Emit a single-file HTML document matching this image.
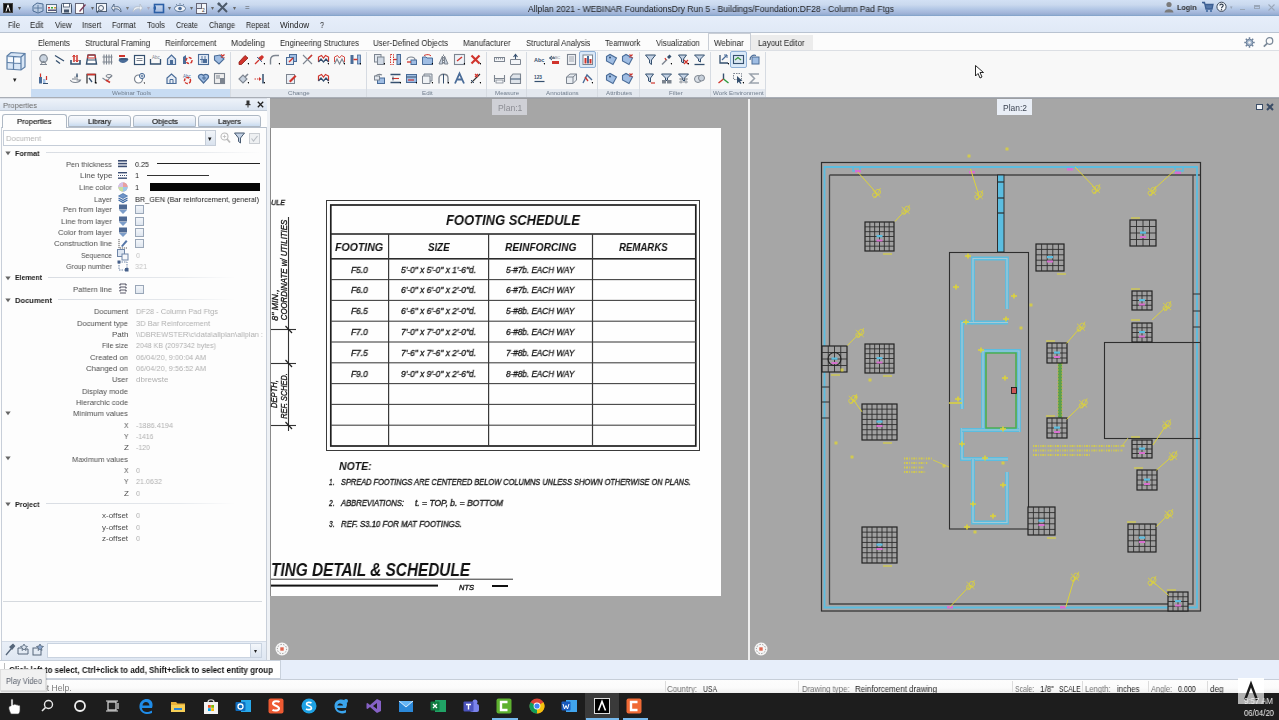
<!DOCTYPE html>
<html><head><meta charset="utf-8"><style>
*{margin:0;padding:0;box-sizing:border-box}
html,body{width:1279px;height:720px;overflow:hidden;background:#f3f3f3;font-family:"Liberation Sans",sans-serif;color:#222}
.a{position:absolute}
.t{position:absolute;white-space:nowrap;line-height:1;transform-origin:0 50%;will-change:transform}
svg{position:absolute;overflow:visible}
</style></head><body>
<div class="a" style="left:0px;top:0px;width:1279px;height:16px;background:linear-gradient(#d2e0f4 0%,#cad9ee 30%,#b4c8e6 55%,#a3b6da 80%,#8ba8cd 100%)"></div>
<div class="a" style="left:0px;top:15px;width:1279px;height:1px;background:#86a5cb"></div>
<div class="a" style="left:3px;top:3px;width:10px;height:10px;background:#111;border:1px solid #444"></div>
<svg style="left:3px;top:3px;" width="10" height="10" viewBox="0 0 10 10"><path d="M3 8.5 L5 1.8 L7 8.5" fill="none" stroke="#fff" stroke-width="1"/></svg>
<div class="t" style="left:18.00px;top:5.00px;font-size:6px;font-family:'Liberation Sans',sans-serif;font-weight:normal;font-style:normal;color:#555;">▾</div>
<svg style="left:32px;top:2px;" width="11" height="12" viewBox="0 0 11 12"><path d="M1 4 L5 1 L11 2 L11 9 L6 11 L1 9Z" fill="#b9cce4" stroke="#4d6c93" stroke-width="1"/><path d="M6 3 V10 M2 6 H10" stroke="#4d6c93" stroke-width="0.8"/></svg>
<svg style="left:46px;top:2px;" width="11" height="12" viewBox="0 0 11 12"><rect x="0.5" y="2.5" width="10" height="8" fill="#f4f4f4" stroke="#5a6f88"/><rect x="2" y="5" width="2" height="1.5" fill="#c33"/><rect x="5" y="5" width="2" height="1.5" fill="#3a3"/><rect x="8" y="5" width="2" height="1.5" fill="#c93"/><rect x="2" y="7.5" width="8" height="1.5" fill="#557"/></svg>
<svg style="left:61px;top:2px;" width="11" height="12" viewBox="0 0 11 12"><rect x="0.5" y="1.5" width="10" height="10" rx="1" fill="#dfe6ef" stroke="#44546a"/><rect x="2.5" y="1.5" width="6" height="3.5" fill="#fff" stroke="#44546a" stroke-width="0.8"/><rect x="3" y="7.5" width="5" height="3" fill="#44546a"/></svg>
<svg style="left:75px;top:2px;" width="11" height="12" viewBox="0 0 11 12"><rect x="0.5" y="1.5" width="8" height="10" fill="#fafafa" stroke="#667"/><path d="M4 9 L10 2 L11 3 L5 10Z" fill="#7a3b58"/></svg>
<div class="t" style="left:91.00px;top:5.00px;font-size:6px;font-family:'Liberation Sans',sans-serif;font-weight:normal;font-style:normal;color:#666;">▾</div>
<svg style="left:96px;top:2px;" width="11" height="12" viewBox="0 0 11 12"><rect x="0.5" y="1.5" width="10" height="8" fill="#f4f6f9" stroke="#4f5f74"/><circle cx="5" cy="6" r="2.5" fill="none" stroke="#4f5f74"/><path d="M3 8 L1 11" stroke="#4f5f74" stroke-width="1.3"/></svg>
<svg style="left:111px;top:2px;" width="11" height="12" viewBox="0 0 11 12"><path d="M10 10 C10 5 7 4 3 5 L3 2 L0.5 6 L3 9.5 L3 7 C6 6.5 8 7 10 10Z" fill="#e9eef5" stroke="#4f6580" stroke-width="0.9"/></svg>
<div class="t" style="left:126.00px;top:5.00px;font-size:6px;font-family:'Liberation Sans',sans-serif;font-weight:normal;font-style:normal;color:#777;">▾</div>
<svg style="left:132px;top:2px;" width="11" height="12" viewBox="0 0 11 12"><path d="M1 10 C1 5 4 4 8 5 L8 2 L10.5 6 L8 9.5 L8 7 C5 6.5 3 7 1 10Z" fill="#eef2f6" stroke="#b5c0cc" stroke-width="0.9"/></svg>
<div class="t" style="left:147.00px;top:5.00px;font-size:6px;font-family:'Liberation Sans',sans-serif;font-weight:normal;font-style:normal;color:#aab;">▾</div>
<svg style="left:153px;top:2px;" width="11" height="12" viewBox="0 0 11 12"><rect x="1.5" y="2.5" width="9" height="8" fill="none" stroke="#2b5fa6" stroke-width="1.6"/><path d="M0 6 L3 4 L3 8Z" fill="#2b5fa6"/></svg>
<div class="t" style="left:168.00px;top:5.00px;font-size:6px;font-family:'Liberation Sans',sans-serif;font-weight:normal;font-style:normal;color:#666;">▾</div>
<svg style="left:174px;top:2px;" width="11" height="12" viewBox="0 0 11 12"><ellipse cx="6" cy="6.5" rx="5.5" ry="3.2" fill="#eef2f8" stroke="#607a9a"/><circle cx="6" cy="6.5" r="1.8" fill="#4d6e99"/><path d="M2 2 L3 3 M6 1 V2.5 M10 2 L9 3" stroke="#7a8ea8"/></svg>
<div class="t" style="left:190.00px;top:5.00px;font-size:6px;font-family:'Liberation Sans',sans-serif;font-weight:normal;font-style:normal;color:#666;">▾</div>
<svg style="left:196px;top:2px;" width="11" height="12" viewBox="0 0 11 12"><rect x="0.5" y="1.5" width="10" height="10" fill="#f5f7fa" stroke="#667"/><rect x="0.5" y="1.5" width="5" height="5" fill="#dbe3ee" stroke="#667"/><text x="6" y="10" font-size="5" fill="#333" font-family="Liberation Sans">2</text></svg>
<div class="t" style="left:211.00px;top:5.00px;font-size:6px;font-family:'Liberation Sans',sans-serif;font-weight:normal;font-style:normal;color:#666;">▾</div>
<svg style="left:217px;top:2px;" width="11" height="12" viewBox="0 0 11 12"><path d="M1 1 L10 10 M10 1 L1 10" stroke="#4d5a6a" stroke-width="2"/><circle cx="2" cy="2" r="1.5" fill="#4d5a6a"/></svg>
<div class="t" style="left:233.00px;top:5.00px;font-size:6px;font-family:'Liberation Sans',sans-serif;font-weight:normal;font-style:normal;color:#666;">▾</div>
<div class="t" style="left:245.00px;top:4.00px;font-size:8px;font-family:'Liberation Sans',sans-serif;font-weight:normal;font-style:normal;color:#555;">=</div>
<div class="t" style="left:528.00px;top:5.00px;font-size:8.6px;font-family:'Liberation Sans',sans-serif;font-weight:normal;font-style:normal;color:#222;transform:scaleX(0.9925);">Allplan 2021 - WEBINAR FoundationsDry Run 5 - Buildings/Foundation:DF28 - Column Pad Ftgs</div>
<svg style="left:1164px;top:1px;" width="10" height="12" viewBox="0 0 10 12"><circle cx="5" cy="3.5" r="2.6" fill="#7b7b7b"/><path d="M0.5 11.5 C0.5 7 9.5 7 9.5 11.5Z" fill="#7b7b7b"/></svg>
<div class="t" style="left:1176.50px;top:4.00px;font-size:8px;font-family:'Liberation Sans',sans-serif;font-weight:bold;font-style:normal;color:#333;transform:scaleX(0.8953);">Login</div>
<svg style="left:1202px;top:1px;" width="11" height="12" viewBox="0 0 11 12"><path d="M0 1.5 H2.5 L4 8 H10 L11 3.5 H3" fill="#5577a8" stroke="#3d5f93" stroke-width="1.3"/><circle cx="5" cy="10" r="1.1" fill="#3f6aa0"/><circle cx="9" cy="10" r="1.1" fill="#3f6aa0"/></svg>
<svg style="left:1216px;top:1px;" width="11" height="12" viewBox="0 0 11 12"><circle cx="5.5" cy="5.8" r="4.6" fill="#f3f6fa" stroke="#3d4a5c" stroke-width="1"/><path d="M3.8 4.6 C3.8 2.6 7.2 2.6 7.2 4.6 C7.2 5.8 5.5 5.8 5.5 7.2" fill="none" stroke="#2d3a4c" stroke-width="1.1"/><circle cx="5.5" cy="8.8" r="0.7" fill="#2d3a4c"/></svg>
<div class="t" style="left:1230.00px;top:5.00px;font-size:5px;font-family:'Liberation Sans',sans-serif;font-weight:normal;font-style:normal;color:#98a4b5;">▾</div>
<div class="a" style="left:1240px;top:9px;width:5px;height:1px;background:#9aa7b8"></div>
<div class="a" style="left:1254px;top:5px;width:6px;height:4px;border:1px solid #9aa7b8;border-top-width:2px"></div>
<svg style="left:1268px;top:4px;" width="7" height="7" viewBox="0 0 7 7"><path d="M0.5 0.5 L6.5 6.5 M6.5 0.5 L0.5 6.5" stroke="#9aa7b8" stroke-width="1.1"/></svg>
<div class="a" style="left:0px;top:16px;width:1279px;height:16px;background:linear-gradient(#e6eefa,#e0e9f6)"></div>
<div class="a" style="left:0px;top:32px;width:1279px;height:1px;background:#b9c3d1"></div>
<div class="t" style="left:7.80px;top:22.00px;font-size:8.2px;font-family:'Liberation Sans',sans-serif;font-weight:normal;font-style:normal;color:#1e1e1e;transform:scaleX(0.9013);">File</div>
<div class="t" style="left:30.30px;top:22.00px;font-size:8.2px;font-family:'Liberation Sans',sans-serif;font-weight:normal;font-style:normal;color:#1e1e1e;transform:scaleX(0.9497);">Edit</div>
<div class="t" style="left:54.70px;top:22.00px;font-size:8.2px;font-family:'Liberation Sans',sans-serif;font-weight:normal;font-style:normal;color:#1e1e1e;transform:scaleX(0.9370);">View</div>
<div class="t" style="left:81.90px;top:22.00px;font-size:8.2px;font-family:'Liberation Sans',sans-serif;font-weight:normal;font-style:normal;color:#1e1e1e;transform:scaleX(0.9324);">Insert</div>
<div class="t" style="left:112.00px;top:22.00px;font-size:8.2px;font-family:'Liberation Sans',sans-serif;font-weight:normal;font-style:normal;color:#1e1e1e;transform:scaleX(0.9099);">Format</div>
<div class="t" style="left:146.60px;top:22.00px;font-size:8.2px;font-family:'Liberation Sans',sans-serif;font-weight:normal;font-style:normal;color:#1e1e1e;transform:scaleX(0.9307);">Tools</div>
<div class="t" style="left:175.60px;top:22.00px;font-size:8.2px;font-family:'Liberation Sans',sans-serif;font-weight:normal;font-style:normal;color:#1e1e1e;transform:scaleX(0.8910);">Create</div>
<div class="t" style="left:208.75px;top:22.00px;font-size:8.2px;font-family:'Liberation Sans',sans-serif;font-weight:normal;font-style:normal;color:#1e1e1e;transform:scaleX(0.9063);">Change</div>
<div class="t" style="left:246.00px;top:22.00px;font-size:8.2px;font-family:'Liberation Sans',sans-serif;font-weight:normal;font-style:normal;color:#1e1e1e;transform:scaleX(0.8862);">Repeat</div>
<div class="t" style="left:280.30px;top:22.00px;font-size:8.2px;font-family:'Liberation Sans',sans-serif;font-weight:normal;font-style:normal;color:#1e1e1e;transform:scaleX(0.9991);">Window</div>
<div class="t" style="left:320.30px;top:22.00px;font-size:8.2px;font-family:'Liberation Sans',sans-serif;font-weight:normal;font-style:normal;color:#1e1e1e;transform:scaleX(0.8767);">?</div>
<div class="a" style="left:0px;top:33px;width:1279px;height:17px;background:#fcfcfc"></div>
<div class="a" style="left:750px;top:35px;width:63px;height:15px;background:#ececec"></div>
<div class="a" style="left:708px;top:33px;width:43px;height:18px;background:#fbfbfb;border:1px solid #c9ced6;border-bottom:none"></div>
<div class="t" style="left:38.10px;top:39.00px;font-size:8.7px;font-family:'Liberation Sans',sans-serif;font-weight:normal;font-style:normal;color:#262626;transform:scaleX(0.8808);">Elements</div>
<div class="t" style="left:84.70px;top:39.00px;font-size:8.7px;font-family:'Liberation Sans',sans-serif;font-weight:normal;font-style:normal;color:#262626;transform:scaleX(0.9139);">Structural Framing</div>
<div class="t" style="left:164.70px;top:39.00px;font-size:8.7px;font-family:'Liberation Sans',sans-serif;font-weight:normal;font-style:normal;color:#262626;transform:scaleX(0.9115);">Reinforcement</div>
<div class="t" style="left:231.25px;top:39.00px;font-size:8.7px;font-family:'Liberation Sans',sans-serif;font-weight:normal;font-style:normal;color:#262626;transform:scaleX(0.9556);">Modeling</div>
<div class="t" style="left:279.70px;top:39.00px;font-size:8.7px;font-family:'Liberation Sans',sans-serif;font-weight:normal;font-style:normal;color:#262626;transform:scaleX(0.8939);">Engineering Structures</div>
<div class="t" style="left:373.40px;top:39.00px;font-size:8.7px;font-family:'Liberation Sans',sans-serif;font-weight:normal;font-style:normal;color:#262626;transform:scaleX(0.9031);">User-Defined Objects</div>
<div class="t" style="left:463.40px;top:39.00px;font-size:8.7px;font-family:'Liberation Sans',sans-serif;font-weight:normal;font-style:normal;color:#262626;transform:scaleX(0.9299);">Manufacturer</div>
<div class="t" style="left:525.60px;top:39.00px;font-size:8.7px;font-family:'Liberation Sans',sans-serif;font-weight:normal;font-style:normal;color:#262626;transform:scaleX(0.9011);">Structural Analysis</div>
<div class="t" style="left:605.30px;top:39.00px;font-size:8.7px;font-family:'Liberation Sans',sans-serif;font-weight:normal;font-style:normal;color:#262626;transform:scaleX(0.8916);">Teamwork</div>
<div class="t" style="left:655.60px;top:39.00px;font-size:8.7px;font-family:'Liberation Sans',sans-serif;font-weight:normal;font-style:normal;color:#262626;transform:scaleX(0.9008);">Visualization</div>
<div class="t" style="left:714.00px;top:39.00px;font-size:8.7px;font-family:'Liberation Sans',sans-serif;font-weight:normal;font-style:normal;color:#262626;transform:scaleX(0.9238);">Webinar</div>
<div class="t" style="left:758.40px;top:39.00px;font-size:8.7px;font-family:'Liberation Sans',sans-serif;font-weight:normal;font-style:normal;color:#262626;transform:scaleX(0.9081);">Layout Editor</div>
<svg style="left:1244px;top:37px;" width="11" height="11" viewBox="0 0 11 11"><circle cx="5.5" cy="5.5" r="3.3" fill="#9fb2c9" stroke="#6d819a" stroke-width="1"/><circle cx="5.5" cy="5.5" r="1.3" fill="#f6f6f6"/><path d="M5.5 0.3 V2 M5.5 9 V10.7 M0.3 5.5 H2 M9 5.5 H10.7 M1.8 1.8 L3 3 M8 8 L9.2 9.2 M9.2 1.8 L8 3 M3 8 L1.8 9.2" stroke="#6d819a" stroke-width="1.5"/></svg>
<svg style="left:1263px;top:37px;" width="11" height="11" viewBox="0 0 11 11"><circle cx="6.5" cy="4" r="3.3" fill="none" stroke="#7a8898" stroke-width="1.2"/><path d="M4.2 6.3 L0.8 9.7" stroke="#7a8898" stroke-width="1.7"/></svg>
<div class="a" style="left:0px;top:50px;width:1279px;height:47px;background:#f8f8f8"></div>
<div class="a" style="left:31px;top:50px;width:1248px;height:1px;background:#dcdfe4"></div>
<div class="a" style="left:31px;top:50px;width:1px;height:47px;background:#dfe3e8"></div>
<div class="a" style="left:31px;top:89px;width:200px;height:8px;background:#c8dcf3"></div>
<div class="a" style="left:230px;top:52px;width:1px;height:45px;background:#d6dbe2"></div>
<div class="t" style="left:111.51px;top:90.00px;font-size:6.2px;font-family:'Liberation Sans',sans-serif;font-weight:normal;font-style:normal;color:#6f7c8c;">Webinar Tools</div>
<div class="a" style="left:231px;top:89px;width:136px;height:8px;background:#e3e8ef"></div>
<div class="a" style="left:366px;top:52px;width:1px;height:45px;background:#d6dbe2"></div>
<div class="t" style="left:288.16px;top:90.00px;font-size:6.2px;font-family:'Liberation Sans',sans-serif;font-weight:normal;font-style:normal;color:#6f7c8c;">Change</div>
<div class="a" style="left:367px;top:89px;width:120px;height:8px;background:#e3e8ef"></div>
<div class="a" style="left:486px;top:52px;width:1px;height:45px;background:#d6dbe2"></div>
<div class="t" style="left:421.66px;top:90.00px;font-size:6.2px;font-family:'Liberation Sans',sans-serif;font-weight:normal;font-style:normal;color:#6f7c8c;">Edit</div>
<div class="a" style="left:487px;top:89px;width:40px;height:8px;background:#e3e8ef"></div>
<div class="a" style="left:526px;top:52px;width:1px;height:45px;background:#d6dbe2"></div>
<div class="t" style="left:494.96px;top:90.00px;font-size:6.2px;font-family:'Liberation Sans',sans-serif;font-weight:normal;font-style:normal;color:#6f7c8c;">Measure</div>
<div class="a" style="left:527px;top:89px;width:71px;height:8px;background:#e3e8ef"></div>
<div class="a" style="left:597px;top:52px;width:1px;height:45px;background:#d6dbe2"></div>
<div class="t" style="left:546.16px;top:90.00px;font-size:6.2px;font-family:'Liberation Sans',sans-serif;font-weight:normal;font-style:normal;color:#6f7c8c;">Annotations</div>
<div class="a" style="left:598px;top:89px;width:42px;height:8px;background:#e3e8ef"></div>
<div class="a" style="left:639px;top:52px;width:1px;height:45px;background:#d6dbe2"></div>
<div class="t" style="left:605.93px;top:90.00px;font-size:6.2px;font-family:'Liberation Sans',sans-serif;font-weight:normal;font-style:normal;color:#6f7c8c;">Attributes</div>
<div class="a" style="left:640px;top:89px;width:71px;height:8px;background:#e3e8ef"></div>
<div class="a" style="left:710px;top:52px;width:1px;height:45px;background:#d6dbe2"></div>
<div class="t" style="left:668.62px;top:90.00px;font-size:6.2px;font-family:'Liberation Sans',sans-serif;font-weight:normal;font-style:normal;color:#6f7c8c;">Filter</div>
<div class="a" style="left:711px;top:89px;width:55px;height:8px;background:#e3e8ef"></div>
<div class="a" style="left:765px;top:52px;width:1px;height:45px;background:#d6dbe2"></div>
<div class="t" style="left:713.11px;top:90.00px;font-size:6.2px;font-family:'Liberation Sans',sans-serif;font-weight:normal;font-style:normal;color:#6f7c8c;">Work Environment</div>
<div class="a" style="left:0px;top:97px;width:1279px;height:1px;background:#d0d5dc"></div>
<svg style="left:5px;top:51px;" width="22" height="20" viewBox="0 0 22 20"><path d="M2 5 L6 1.5 L20 2.5 L20 16 L16 19 L2 18Z" fill="#d8e6f6" stroke="#5c7ea6" stroke-width="1.2"/><path d="M2 5 L16 6 L16 19 M16 6 L20 2.5 M2 11.5 L16 12.5 M8.5 5.5 V18.5" fill="none" stroke="#5c7ea6" stroke-width="1.2"/><rect x="3" y="6.5" width="5" height="4.5" fill="#fff" opacity="0.8"/><rect x="9.5" y="7" width="5.5" height="4.5" fill="#fff" opacity="0.8"/></svg>
<div class="t" style="left:13.00px;top:76.00px;font-size:7px;font-family:'Liberation Sans',sans-serif;font-weight:normal;font-style:normal;color:#222;">▾</div>
<svg style="left:37.5px;top:54.0px;" width="12" height="12" viewBox="0 0 12 12"><circle cx="5.5" cy="4.5" r="3.8" fill="#c9d3df" stroke="#7d8590" stroke-width="1.2"/><path d="M3 9.5 L5.5 7.5 L8 9.5 M2 10.5 H9" stroke="#7d8590" stroke-width="1.2" fill="none"/></svg>
<svg style="left:53.5px;top:54.0px;" width="12" height="12" viewBox="0 0 12 12"><path d="M1 1.5 L10 7 M2 6.5 L6 9.5" stroke="#35506f" stroke-width="1.3"/></svg>
<svg style="left:69.5px;top:54.0px;" width="12" height="12" viewBox="0 0 12 12"><path d="M1 6 V10 H10 V6" fill="none" stroke="#35506f" stroke-width="1.6"/><path d="M4 8 V1 M7 1 V8" stroke="#d0342c" stroke-width="1.5"/><path d="M2.5 3 L4 1 L5.5 3 M5.5 6 L7 8 L8.5 6" fill="none" stroke="#d0342c" stroke-width="1"/></svg>
<svg style="left:85.5px;top:54.0px;" width="12" height="12" viewBox="0 0 12 12"><path d="M2 1 H9 L10.5 10 H0.5Z" fill="#fff" stroke="#35506f" stroke-width="1.4"/><path d="M2 1 H9 L9.5 4 H1.5Z" fill="none" stroke="#d0342c" stroke-width="1"/><path d="M1.5 6 H9.5" stroke="#35506f" stroke-width="1"/></svg>
<svg style="left:102.0px;top:54.0px;" width="12" height="12" viewBox="0 0 12 12"><path d="M2 0.5 V10.5 M4.5 0.5 V10.5 M7 0.5 V10.5 M9.5 0.5 V10.5 M0.5 3 H10.5 M0.5 8 H10.5" stroke="#7d8590" stroke-width="1.1"/></svg>
<svg style="left:118.0px;top:54.0px;" width="12" height="12" viewBox="0 0 12 12"><rect x="1" y="1" width="6" height="2" fill="#d0342c"/><path d="M0.5 6 C2 10 8 10 10.5 5.5 L8 4 H3Z" fill="#4a6c98"/><path d="M1 5 H10" stroke="#35506f" stroke-width="1.2"/></svg>
<svg style="left:134.0px;top:54.0px;" width="12" height="12" viewBox="0 0 12 12"><rect x="0.5" y="1.5" width="10" height="9" fill="#fff" stroke="#35506f" stroke-width="1.2"/><path d="M2.5 4.5 H8.5 M2.5 6.5 H8.5" stroke="#7d8590" stroke-width="1"/></svg>
<svg style="left:150.0px;top:54.0px;" width="12" height="12" viewBox="0 0 12 12"><path d="M0.5 5 V10 H10.5 V5" fill="none" stroke="#35506f" stroke-width="1.3"/><text x="2" y="5" font-size="4.5" fill="#7d8590" font-family="Liberation Sans">Abc</text></svg>
<svg style="left:165.5px;top:54.0px;" width="12" height="12" viewBox="0 0 12 12"><path d="M1.5 10.5 V5 L5.5 1 L9.5 5 V10.5Z" fill="#dbe5f2" stroke="#4a6c98" stroke-width="1.2"/><rect x="4" y="6" width="3" height="4.5" fill="#4a6c98"/></svg>
<svg style="left:181.5px;top:54.0px;" width="12" height="12" viewBox="0 0 12 12"><path d="M1 10 V3 L4 1 V10Z" fill="#4a6c98"/><circle cx="7" cy="6.5" r="3" fill="none" stroke="#d0342c" stroke-width="1.5" stroke-dasharray="3 1.5"/></svg>
<svg style="left:197.5px;top:54.0px;" width="12" height="12" viewBox="0 0 12 12"><rect x="0.5" y="0.5" width="10" height="10" fill="#e4ecf6" stroke="#4a6c98" stroke-width="1.1"/><path d="M4 2 V9 M7 2 V9 M2 5.5 H9" stroke="#4a6c98" stroke-width="0.9"/><rect x="5" y="5" width="4" height="4" fill="#4a6c98"/></svg>
<svg style="left:213.5px;top:54.0px;" width="12" height="12" viewBox="0 0 12 12"><path d="M0.5 2 L6 1 L10 5 L5 10 L0.5 6Z" fill="#9fbde3" stroke="#4a6c98" stroke-width="1.1"/><path d="M7 0.5 L10.5 3.5 M10.5 0.5 L7 3.5" stroke="#d0342c" stroke-width="1.3"/></svg>
<svg style="left:237.9px;top:54.0px;" width="12" height="12" viewBox="0 0 12 12"><path d="M1 8 L7 1.5 L10 4 L3.5 10.5 H1Z" fill="#d0342c" stroke="#8d1d17" stroke-width="0.8"/><path d="M9.5 9 L11 9 L11 11Z" fill="#000"/></svg>
<svg style="left:253.5px;top:54.0px;" width="12" height="12" viewBox="0 0 12 12"><path d="M1 10 L5 6" stroke="#d0342c" stroke-width="1.3"/><path d="M4 4 L8 1 L10 3 L7 7Z" fill="#d0342c"/><path d="M3 3 L8 8" stroke="#4a6c98" stroke-width="1"/><path d="M9.5 9 L11 9 L11 11Z" fill="#000"/></svg>
<svg style="left:269.0px;top:54.0px;" width="12" height="12" viewBox="0 0 12 12"><path d="M1.5 10.5 V6 C1.5 3 3.5 1.5 6.5 1.5 H10" fill="none" stroke="#7d8590" stroke-width="1.4"/><path d="M9.5 9 L11 9 L11 11Z" fill="#000"/></svg>
<svg style="left:285.5px;top:54.0px;" width="12" height="12" viewBox="0 0 12 12"><rect x="3.5" y="0.5" width="7" height="7" fill="#9fbde3" stroke="#4a6c98" stroke-width="1"/><rect x="0.5" y="3.5" width="7" height="7" fill="#dfe7f2" stroke="#4a6c98" stroke-width="1"/><path d="M3 8 L7 4" stroke="#d0342c" stroke-width="1.4"/></svg>
<svg style="left:302.0px;top:54.0px;" width="12" height="12" viewBox="0 0 12 12"><path d="M1 1 L10 10 M10 1 L1 10" stroke="#7d8590" stroke-width="1.1"/><path d="M6 5 L10 1" stroke="#d0342c" stroke-width="1.5"/></svg>
<svg style="left:317.5px;top:54.0px;" width="12" height="12" viewBox="0 0 12 12"><path d="M0.5 8 V3 L3.5 1.5 L5.5 4 L7.5 1.5 L10.5 3 V8" fill="none" stroke="#d0342c" stroke-width="1.2"/><path d="M0.5 8 L3 5 L5.5 8 L8 5 L10.5 8" fill="none" stroke="#35506f" stroke-width="1.2"/><path d="M9.5 9 L11 9 L11 11Z" fill="#000"/></svg>
<svg style="left:333.5px;top:54.0px;" width="12" height="12" viewBox="0 0 12 12"><path d="M0.5 8 V3 L3.5 1.5 L5.5 4 L7.5 1.5 L10.5 3 V8" fill="none" stroke="#d0342c" stroke-width="0.9"/><path d="M0.5 10 L3 5 L5.5 10 L8 5 L10.5 10" fill="none" stroke="#7d8590" stroke-width="1.2"/><path d="M9.5 9 L11 9 L11 11Z" fill="#000"/></svg>
<svg style="left:349.5px;top:54.0px;" width="12" height="12" viewBox="0 0 12 12"><rect x="0.5" y="1" width="3" height="9" fill="#4a6c98"/><rect x="7.5" y="1" width="3" height="9" fill="#9fbde3" stroke="#4a6c98" stroke-width="0.8"/><path d="M3.5 5.5 H7.5" stroke="#d0342c" stroke-width="1.5"/><path d="M9.5 9 L11 9 L11 11Z" fill="#000"/></svg>
<svg style="left:373.9px;top:54.0px;" width="12" height="12" viewBox="0 0 12 12"><rect x="0.5" y="0.5" width="6.5" height="7.5" fill="#e3e8ef" stroke="#7d8590"/><rect x="3.5" y="3" width="6.5" height="7.5" fill="#cfd8e3" stroke="#7d8590"/><path d="M9.5 9 L11 9 L11 11Z" fill="#000"/></svg>
<svg style="left:390.3px;top:54.0px;" width="12" height="12" viewBox="0 0 12 12"><rect x="0.5" y="0.5" width="3" height="10" fill="none" stroke="#d0342c" stroke-dasharray="1.5 1"/><path d="M3 5.5 H7" stroke="#d0342c" stroke-width="1.3"/><rect x="7" y="0.5" width="3.5" height="10" fill="#9fbde3" stroke="#4a6c98"/><path d="M9.5 9 L11 9 L11 11Z" fill="#000"/></svg>
<svg style="left:405.9px;top:54.0px;" width="12" height="12" viewBox="0 0 12 12"><path d="M1 6 C1 2 9 2 9 6" fill="none" stroke="#7d8590" stroke-width="1.2"/><rect x="5" y="6" width="5.5" height="4.5" fill="#9fbde3" stroke="#4a6c98"/><path d="M1 8 H5" stroke="#d0342c" stroke-width="1.3"/></svg>
<svg style="left:422.0px;top:54.0px;" width="12" height="12" viewBox="0 0 12 12"><path d="M0.5 3 H4 L5 4 H10.5 V10.5 H0.5Z" fill="#9fbde3" stroke="#4a6c98"/><path d="M2 1.5 C5 0 8 0.5 9 2" fill="none" stroke="#d0342c" stroke-width="1"/><path d="M9.5 9 L11 9 L11 11Z" fill="#000"/></svg>
<svg style="left:438.25px;top:54.0px;" width="12" height="12" viewBox="0 0 12 12"><path d="M5.5 0.5 V10.5" stroke="#7d8590" stroke-dasharray="1.5 1"/><path d="M4.5 2 L1 10 H4.5Z M6.5 2 L10 10 H6.5Z" fill="#c8d2de" stroke="#7d8590"/></svg>
<svg style="left:453.9px;top:54.0px;" width="12" height="12" viewBox="0 0 12 12"><rect x="0.5" y="0.5" width="10" height="10" fill="#eef2f7" stroke="#7d8590" stroke-width="1.1"/><path d="M3 7 L8 3" stroke="#d0342c" stroke-width="1.4"/><path d="M9.5 9 L11 9 L11 11Z" fill="#000"/></svg>
<svg style="left:469.5px;top:54.0px;" width="12" height="12" viewBox="0 0 12 12"><path d="M1.5 1.5 L9.5 9.5 M9.5 1.5 L1.5 9.5" stroke="#d0342c" stroke-width="2.2"/><path d="M9.5 9 L11 9 L11 11Z" fill="#000"/></svg>
<svg style="left:493.9px;top:54.0px;" width="12" height="12" viewBox="0 0 12 12"><rect x="0.5" y="3.5" width="10" height="4" fill="#f3f5f8" stroke="#7d8590" stroke-width="1"/><path d="M2.5 3.5 V5.5 M4.5 3.5 V5.5 M6.5 3.5 V5.5 M8.5 3.5 V5.5" stroke="#7d8590" stroke-width="0.8"/></svg>
<svg style="left:509.5px;top:54.0px;" width="12" height="12" viewBox="0 0 12 12"><path d="M0.5 10.5 V5.5 H10.5 V10.5Z" fill="#f3f5f8" stroke="#7d8590"/><path d="M5.5 5 V1 M3.5 3 L5.5 0.5 L7.5 3" fill="none" stroke="#35506f" stroke-width="1.1"/></svg>
<svg style="left:533.5px;top:54.0px;" width="12" height="12" viewBox="0 0 12 12"><text x="0" y="8" font-size="5.5" font-weight="bold" fill="#35506f" font-family="Liberation Sans">Abc</text><path d="M9.5 9 L11 9 L11 11Z" fill="#000"/></svg>
<svg style="left:549.2px;top:54.0px;" width="12" height="12" viewBox="0 0 12 12"><text x="3" y="4.5" font-size="4" fill="#7d8590" font-family="Liberation Sans">ABC</text><path d="M0.5 4 L3 2 M0.5 4 L3 6 M0.5 4 H6" stroke="#35506f" stroke-width="1"/><rect x="3" y="7" width="7" height="3" fill="#d0342c"/></svg>
<svg style="left:565.5px;top:54.0px;" width="12" height="12" viewBox="0 0 12 12"><rect x="1.5" y="0.5" width="8" height="10" fill="#f0f2f5" stroke="#7d8590" stroke-width="1.1"/><path d="M3 3 H8 M3 5 H8 M3 7 H8" stroke="#7d8590" stroke-width="0.7"/></svg>
<svg style="left:605.5px;top:54.0px;" width="12" height="12" viewBox="0 0 12 12"><path d="M0.5 2.5 L4 0.5 L10.5 4 L7 10.5 L0.5 7Z" fill="#9fbde3" stroke="#4a6c98" stroke-width="1.1"/><circle cx="4" cy="3.5" r="1" fill="#35506f"/></svg>
<svg style="left:621.5px;top:54.0px;" width="12" height="12" viewBox="0 0 12 12"><path d="M0.5 2.5 L4 0.5 L10.5 4 L7 10.5 L0.5 7Z" fill="#9fbde3" stroke="#4a6c98" stroke-width="1.1"/><path d="M7.5 0.5 L10.5 3.5 M10.5 0.5 L7.5 3.5" stroke="#d0342c" stroke-width="1.2"/></svg>
<svg style="left:644.5px;top:54.0px;" width="12" height="12" viewBox="0 0 12 12"><path d="M0.5 1 H10.5 L6.5 6 V10.5 L4.5 9 V6Z" fill="#c5d3e5" stroke="#35506f" stroke-width="1"/></svg>
<svg style="left:660.5px;top:54.0px;" width="12" height="12" viewBox="0 0 12 12"><path d="M1 10.5 L6 5.5" stroke="#7d8590" stroke-width="1.4"/><path d="M6 3 L8.5 0.5 L10.5 2.5 L8 5Z" fill="#35506f"/><path d="M5 6 L4 4" stroke="#d0342c" stroke-width="1.2"/><path d="M9.5 9 L11 9 L11 11Z" fill="#000"/></svg>
<svg style="left:677.5px;top:54.0px;" width="12" height="12" viewBox="0 0 12 12"><path d="M0.5 1 H8.5 L5.5 5 V9 L3.5 8 V5Z" fill="#c5d3e5" stroke="#35506f" stroke-width="1"/><path d="M6 6 L10 10 M10 6 L6 10" stroke="#d0342c" stroke-width="1.2"/><path d="M9.5 9 L11 9 L11 11Z" fill="#000"/></svg>
<svg style="left:693.5px;top:54.0px;" width="12" height="12" viewBox="0 0 12 12"><path d="M0.5 1 H10.5 L6.5 5 V8 L4.5 7 V5Z" fill="#c5d3e5" stroke="#35506f" stroke-width="1"/><path d="M0.5 10.5 H10.5" stroke="#35506f" stroke-width="1.3"/></svg>
<svg style="left:717.5px;top:54.0px;" width="12" height="12" viewBox="0 0 12 12"><path d="M2 1 V9 H10" fill="none" stroke="#35506f" stroke-width="1.3"/><path d="M4 6 L9 1" stroke="#4a6c98" stroke-width="1.2"/><path d="M6 1 H9 V4" fill="none" stroke="#4a6c98"/><path d="M9.5 9 L11 9 L11 11Z" fill="#000"/></svg>
<svg style="left:749.2px;top:54.0px;" width="12" height="12" viewBox="0 0 12 12"><rect x="3" y="3" width="7" height="7" fill="#9fbde3" stroke="#4a6c98"/><path d="M1 6 C1 2 4 0.5 7 1.5" fill="none" stroke="#4a6c98" stroke-width="1.2"/></svg>
<svg style="left:37.5px;top:73.0px;" width="12" height="12" viewBox="0 0 12 12"><rect x="1" y="4" width="3" height="6.5" fill="#4a6c98"/><rect x="5" y="6" width="2.5" height="4.5" fill="#9fbde3"/><path d="M2.5 0.5 V4 M8.5 3 V7" stroke="#d0342c" stroke-width="1.2"/><path d="M5 10.5 H10" stroke="#35506f" stroke-width="1"/></svg>
<svg style="left:69.5px;top:73.0px;" width="12" height="12" viewBox="0 0 12 12"><path d="M0.5 7 C1 10 9 10.5 10.5 7 H7 V2 M5 7 V3.5 M3 7 V5" fill="none" stroke="#7d8590" stroke-width="1.1"/><path d="M7 0.5 L7 4" stroke="#35506f" stroke-width="1.3"/></svg>
<svg style="left:85.5px;top:73.0px;" width="12" height="12" viewBox="0 0 12 12"><path d="M1 10.5 V1.5 H9.5 V10.5" fill="none" stroke="#3a3a3a" stroke-width="1.3"/><path d="M1 1.5 H9.5" stroke="#d0342c" stroke-width="1.6"/><path d="M3 5 L6 9" stroke="#35506f" stroke-width="1.3"/><path d="M8.5 9 L10.5 9 L10.5 11Z" fill="#000"/></svg>
<svg style="left:101.5px;top:73.0px;" width="12" height="12" viewBox="0 0 12 12"><path d="M0.5 5 L5 8 L10 2" fill="none" stroke="#7d8590" stroke-width="1.1"/><path d="M4 7 L8 9.5" stroke="#d0342c" stroke-width="1.6"/><ellipse cx="7" cy="3" rx="3" ry="1.5" fill="none" stroke="#7d8590"/></svg>
<svg style="left:133.5px;top:73.0px;" width="12" height="12" viewBox="0 0 12 12"><circle cx="4.5" cy="6" r="4" fill="#fff" stroke="#7d8590" stroke-width="1.2"/><circle cx="8" cy="3" r="2.6" fill="#fff" stroke="#4a6c98" stroke-width="1"/><path d="M8 1.5 V4.5 M6.5 3 H9.5" stroke="#4a6c98" stroke-width="0.9"/><path d="M9.5 9.5 L11 9.5 L11 11Z" fill="#000"/></svg>
<svg style="left:165.5px;top:73.0px;" width="12" height="12" viewBox="0 0 12 12"><path d="M1 10.5 V5 L5.5 1 L10 5 V10.5Z" fill="#e8eef6" stroke="#4a6c98" stroke-width="1.2"/><path d="M4 10.5 V6.5 H7 V10.5" fill="none" stroke="#4a6c98" stroke-width="1"/></svg>
<svg style="left:181.5px;top:73.0px;" width="12" height="12" viewBox="0 0 12 12"><text x="1" y="5" font-size="4.5" fill="#4a6c98" font-family="Liberation Sans">Abc</text><circle cx="5.5" cy="7.5" r="3" fill="none" stroke="#d0342c" stroke-width="1.5" stroke-dasharray="3 1.2"/></svg>
<svg style="left:197.5px;top:73.0px;" width="12" height="12" viewBox="0 0 12 12"><path d="M5.5 10 L0.8 5 C-0.5 2 3 0 5.5 2.5 C8 0 11.5 2 10.2 5Z" fill="#9fbde3" stroke="#4a6c98" stroke-width="1.2"/><path d="M6 3 V7 M4 5 H8" stroke="#4a6c98" stroke-width="1"/></svg>
<svg style="left:213.5px;top:73.0px;" width="12" height="12" viewBox="0 0 12 12"><rect x="0.5" y="0.5" width="10" height="10" fill="#eee" stroke="#7d8590" stroke-width="1.1"/><path d="M2 3 H6 M2 5 H6" stroke="#7d8590"/><rect x="6" y="5" width="4" height="5" fill="#7d8590"/></svg>
<svg style="left:237.5px;top:73.0px;" width="12" height="12" viewBox="0 0 12 12"><path d="M1 6 L5 2 L9 6 L5 10Z" fill="#c8d2de" stroke="#7d8590" stroke-width="1.1"/><path d="M7 4 L10 1" stroke="#7d8590" stroke-width="1.6"/><path d="M9.5 9 L11 9 L11 11Z" fill="#000"/></svg>
<svg style="left:253.5px;top:73.0px;" width="12" height="12" viewBox="0 0 12 12"><path d="M0.5 6 H6" stroke="#d0342c" stroke-width="1.2" stroke-dasharray="1.5 1"/><path d="M5 4 L7.5 6 L5 8Z" fill="#d0342c"/><path d="M9 1 V10.5" stroke="#35506f" stroke-width="1.5"/><path d="M9.5 9 L11 9 L11 11Z" fill="#000"/></svg>
<svg style="left:285.5px;top:73.0px;" width="12" height="12" viewBox="0 0 12 12"><rect x="0.5" y="1.5" width="8" height="9" fill="#e9eef5" stroke="#7d8590" stroke-width="1"/><path d="M3 8 L9 2 L10.5 3.5 L4.5 9.5Z" fill="#d0342c"/></svg>
<svg style="left:317.5px;top:73.0px;" width="12" height="12" viewBox="0 0 12 12"><path d="M0.5 8 V3 L3.5 1.5 L5.5 4 L7.5 1.5 L10.5 3 V8" fill="none" stroke="#d0342c" stroke-width="1.2"/><path d="M0.5 8 L3 5 L5.5 8 L8 5 L10.5 8" fill="none" stroke="#35506f" stroke-width="1.2"/><path d="M9.5 9 L11 9 L11 11Z" fill="#000"/></svg>
<svg style="left:373.9px;top:73.0px;" width="12" height="12" viewBox="0 0 12 12"><path d="M1 5 C1 2 5 0.5 8 2" fill="none" stroke="#7d8590" stroke-width="1.2"/><rect x="3.5" y="5" width="7" height="5.5" fill="#9fbde3" stroke="#4a6c98"/><rect x="0.5" y="3" width="5" height="4" fill="#e3e8ef" stroke="#7d8590"/></svg>
<svg style="left:390.3px;top:73.0px;" width="12" height="12" viewBox="0 0 12 12"><path d="M0.5 1.5 H10.5 M0.5 9.5 H10.5" stroke="#35506f" stroke-width="1.4"/><path d="M2 5.5 H9" stroke="#d0342c" stroke-width="1.1"/><path d="M3 3.5 V7.5" stroke="#35506f"/><path d="M9.5 9 L11 9 L11 11Z" fill="#000"/></svg>
<svg style="left:405.9px;top:73.0px;" width="12" height="12" viewBox="0 0 12 12"><rect x="0.5" y="1.5" width="10" height="8" fill="#9fbde3" stroke="#4a6c98"/><path d="M0.5 4 H10.5" stroke="#35506f"/><path d="M2 7 H8" stroke="#d0342c" stroke-width="1.2"/><path d="M9.5 9 L11 9 L11 11Z" fill="#000"/></svg>
<svg style="left:422.0px;top:73.0px;" width="12" height="12" viewBox="0 0 12 12"><path d="M2 1 H10 V8 H2Z" fill="#dde2e8" stroke="#7d8590"/><path d="M0.5 3 H8 V10.5 H0.5Z" fill="#eef1f4" stroke="#7d8590"/><path d="M9.5 9 L11 9 L11 11Z" fill="#000"/></svg>
<svg style="left:438.25px;top:73.0px;" width="12" height="12" viewBox="0 0 12 12"><path d="M1 10.5 V5 C1 0 10 0 10 5 V10.5" fill="none" stroke="#7d8590" stroke-width="1.3"/><path d="M5.5 1 V10.5" stroke="#35506f"/><path d="M9.5 9 L11 9 L11 11Z" fill="#000"/></svg>
<svg style="left:453.9px;top:73.0px;" width="12" height="12" viewBox="0 0 12 12"><path d="M1 10.5 L5.5 0.5 L10 10.5 M3 6.5 H8" fill="none" stroke="#4a6c98" stroke-width="1.8"/></svg>
<svg style="left:469.5px;top:73.0px;" width="12" height="12" viewBox="0 0 12 12"><path d="M1 10 L10 1" stroke="#333" stroke-width="1.1"/><path d="M5 1 L8 4 M8 1 L5 4" stroke="#d0342c" stroke-width="1.3"/><path d="M1 7 L4 10" stroke="#35506f"/><path d="M9.5 9 L11 9 L11 11Z" fill="#000"/></svg>
<svg style="left:493.9px;top:73.0px;" width="12" height="12" viewBox="0 0 12 12"><path d="M0.5 2 V9 M10.5 2 V9 M0.5 5.5 H10.5" stroke="#7d8590" stroke-width="1.1"/><rect x="2" y="7" width="7" height="3" fill="#f3f5f8" stroke="#7d8590" stroke-width="0.8"/></svg>
<svg style="left:509.5px;top:73.0px;" width="12" height="12" viewBox="0 0 12 12"><path d="M0.5 10.5 V4 L3 1 H10.5 V10.5Z" fill="#dfe4ea" stroke="#7d8590" stroke-width="1.1"/><path d="M0.5 6 H10.5" stroke="#35506f"/></svg>
<svg style="left:533.5px;top:73.0px;" width="12" height="12" viewBox="0 0 12 12"><text x="0" y="6" font-size="4.8" font-weight="bold" fill="#35506f" font-family="Liberation Sans">123</text><path d="M0.5 8.5 H10.5" stroke="#35506f" stroke-width="1.2"/></svg>
<svg style="left:565.5px;top:73.0px;" width="12" height="12" viewBox="0 0 12 12"><path d="M0.5 4 L4 1 H10.5 V7 L7 10.5 H0.5Z" fill="#e8ecf1" stroke="#7d8590"/><path d="M0.5 4 H7 V10.5 M7 4 L10.5 1" fill="none" stroke="#7d8590"/></svg>
<svg style="left:581.5px;top:73.0px;" width="12" height="12" viewBox="0 0 12 12"><path d="M1 10 L5 2 L10 7" fill="none" stroke="#4a6c98" stroke-width="1.4"/><path d="M3 4 L6 8" stroke="#d0342c" stroke-width="1.3"/><path d="M9.5 9 L11 9 L11 11Z" fill="#000"/></svg>
<svg style="left:605.5px;top:73.0px;" width="12" height="12" viewBox="0 0 12 12"><path d="M0.5 2.5 L4 0.5 L10.5 4 L7 10.5 L0.5 7Z" fill="#9fbde3" stroke="#4a6c98" stroke-width="1.1"/><circle cx="4" cy="3.5" r="1" fill="#35506f"/></svg>
<svg style="left:621.5px;top:73.0px;" width="12" height="12" viewBox="0 0 12 12"><path d="M0.5 2.5 L4 0.5 L10.5 4 L7 10.5 L0.5 7Z" fill="#9fbde3" stroke="#4a6c98" stroke-width="1.1"/><path d="M7.5 0.5 L10.5 3.5 M10.5 0.5 L7.5 3.5" stroke="#d0342c" stroke-width="1.2"/></svg>
<svg style="left:644.5px;top:73.0px;" width="12" height="12" viewBox="0 0 12 12"><path d="M0.5 1 H8.5 L5.5 5 V9 L3.5 8 V5Z" fill="#c5d3e5" stroke="#35506f" stroke-width="1"/><path d="M6 10 L10 10" stroke="#d0342c" stroke-width="1.2"/></svg>
<svg style="left:660.5px;top:73.0px;" width="12" height="12" viewBox="0 0 12 12"><path d="M0.5 1 H10.5 L6.5 5 V8 L4.5 7 V5Z" fill="#c5d3e5" stroke="#35506f" stroke-width="1"/><rect x="1" y="7" width="4" height="3.5" fill="#7d8590"/><rect x="6" y="7" width="4.5" height="3.5" fill="#7d8590"/></svg>
<svg style="left:677.5px;top:73.0px;" width="12" height="12" viewBox="0 0 12 12"><path d="M0.5 1 H10.5 L6.5 5 V8 L4.5 7 V5Z" fill="#c5d3e5" stroke="#35506f" stroke-width="1"/><path d="M1 6 H10 M1 9 H10 M3 5 V10.5 M8 5 V10.5" stroke="#7d8590" stroke-width="0.8"/></svg>
<svg style="left:693.5px;top:73.0px;" width="12" height="12" viewBox="0 0 12 12"><circle cx="4" cy="6" r="3.5" fill="#d8dee6" stroke="#7d8590"/><circle cx="7.5" cy="5" r="3" fill="#c7d0db" stroke="#7d8590"/></svg>
<svg style="left:717.5px;top:73.0px;" width="12" height="12" viewBox="0 0 12 12"><path d="M5.5 6 V0.5" stroke="#35506f" stroke-width="1.4"/><path d="M5.5 6 L0.5 10" stroke="#d0342c" stroke-width="1.4"/><path d="M5.5 6 L10.5 10" stroke="#2e9a3e" stroke-width="1.4"/></svg>
<svg style="left:732.9px;top:73.0px;" width="12" height="12" viewBox="0 0 12 12"><rect x="0.5" y="0.5" width="8" height="6" fill="none" stroke="#7d8590" stroke-dasharray="1.5 1"/><path d="M4 3 V10.5 L5.8 8.8 L7.5 11 L8.5 10.3 L7 8 H9.5Z" fill="#35506f"/><path d="M9.5 9 L11 9 L11 11Z" fill="#000"/></svg>
<svg style="left:749.2px;top:73.0px;" width="12" height="12" viewBox="0 0 12 12"><path d="M10 1 H1 L5.5 5.5 L1 10 H10" fill="none" stroke="#9aa2ac" stroke-width="1.5"/></svg>
<div class="a" style="left:578.5px;top:51.0px;width:17px;height:17px;background:#dbe9f8;border:1px solid #8fb0d6;border-radius:2px"></div>
<svg style="left:581.5px;top:54.0px;" width="12" height="12" viewBox="0 0 12 12"><rect x="1" y="1" width="9.5" height="9.5" fill="#fff" stroke="#7d8590"/><rect x="2.5" y="4" width="2" height="5.5" fill="#d0342c"/><rect x="5" y="2" width="2" height="7.5" fill="#4a6c98"/><rect x="7.5" y="5" width="2" height="4.5" fill="#d0342c"/></svg>
<div class="a" style="left:729.9px;top:51.0px;width:17px;height:17px;background:#dbe9f8;border:1px solid #8fb0d6;border-radius:2px"></div>
<svg style="left:732.9px;top:54.0px;" width="12" height="12" viewBox="0 0 12 12"><rect x="0.5" y="1.5" width="10" height="8" fill="#dbe6f3" stroke="#35506f" stroke-width="1.1"/><path d="M2 6 L5 3.5 L8 6" fill="none" stroke="#3a9a3a" stroke-width="1.2"/></svg>
<div class="a" style="left:0px;top:97px;width:268px;height:563px;background:#fdfdfd"></div>
<div class="a" style="left:0px;top:98px;width:267px;height:13px;background:linear-gradient(#edf2f9,#dae4f1);border-bottom:1px solid #c3ccd8;border-top:1px solid #d9dee6"></div>
<div class="t" style="left:3.00px;top:102.00px;font-size:8px;font-family:'Liberation Sans',sans-serif;font-weight:normal;font-style:normal;color:#6b6b6b;transform:scaleX(0.9323);">Properties</div>
<svg style="left:245px;top:100px;" width="6" height="8" viewBox="0 0 6 8"><rect x="1.5" y="0.5" width="3" height="4" fill="#333"/><rect x="0.5" y="4" width="5" height="1.2" fill="#333"/><rect x="2.5" y="5" width="1" height="2.5" fill="#333"/></svg>
<svg style="left:257px;top:100.5px;" width="7" height="7" viewBox="0 0 7 7"><path d="M0.8 0.8 L6.2 6.2 M6.2 0.8 L0.8 6.2" stroke="#222" stroke-width="1.3"/></svg>
<div class="a" style="left:1px;top:127px;width:266px;height:533px;border:1px solid #c8cfd9;border-top:1px solid #b7c0cc;background:#fdfdfd"></div>
<div class="a" style="left:68px;top:115px;width:63px;height:12px;background:linear-gradient(#f8fafd,#e3ebf5 60%,#c9dbf0);border:1px solid #aeb8c4;border-radius:3px 3px 0 0"></div>
<div class="t" style="left:88.00px;top:118.00px;font-size:8px;font-family:'Liberation Sans',sans-serif;font-weight:normal;font-style:normal;color:#1d1d1d;transform:scaleX(0.9406);-webkit-text-stroke:0.2px #1d1d1d;">Library</div>
<div class="a" style="left:133px;top:115px;width:63px;height:12px;background:linear-gradient(#f8fafd,#e3ebf5 60%,#c9dbf0);border:1px solid #aeb8c4;border-radius:3px 3px 0 0"></div>
<div class="t" style="left:151.50px;top:118.00px;font-size:8px;font-family:'Liberation Sans',sans-serif;font-weight:normal;font-style:normal;color:#1d1d1d;transform:scaleX(0.9585);-webkit-text-stroke:0.2px #1d1d1d;">Objects</div>
<div class="a" style="left:198px;top:115px;width:63px;height:12px;background:linear-gradient(#f8fafd,#e3ebf5 60%,#c9dbf0);border:1px solid #aeb8c4;border-radius:3px 3px 0 0"></div>
<div class="t" style="left:218.00px;top:118.00px;font-size:8px;font-family:'Liberation Sans',sans-serif;font-weight:normal;font-style:normal;color:#1d1d1d;transform:scaleX(0.9577);-webkit-text-stroke:0.2px #1d1d1d;">Layers</div>
<div class="a" style="left:2px;top:114px;width:65px;height:14px;background:#fdfdfd;border:1px solid #aeb8c4;border-bottom:none;border-radius:3px 3px 0 0"></div>
<div class="t" style="left:17.25px;top:118.00px;font-size:8px;font-family:'Liberation Sans',sans-serif;font-weight:normal;font-style:normal;color:#1d1d1d;transform:scaleX(0.9460);-webkit-text-stroke:0.2px #1d1d1d;">Properties</div>
<div class="a" style="left:3px;top:130px;width:213px;height:16px;background:#fff;border:1px solid #c5cdd8"></div>
<div class="t" style="left:6.00px;top:135.00px;font-size:8px;font-family:'Liberation Sans',sans-serif;font-weight:normal;font-style:normal;color:#b3b3b3;transform:scaleX(0.9597);">Document</div>
<div class="a" style="left:205px;top:131px;width:10px;height:14px;background:linear-gradient(#f2f5f9,#d9e2ee);border-left:1px solid #c5cdd8"></div>
<div class="t" style="left:208.00px;top:135.00px;font-size:7px;font-family:'Liberation Sans',sans-serif;font-weight:normal;font-style:normal;color:#111;">▾</div>
<svg style="left:220px;top:132px;" width="11" height="12" viewBox="0 0 11 12"><circle cx="4.5" cy="4.5" r="3.5" fill="none" stroke="#bcbcbc" stroke-width="1.1"/><path d="M7 7 L10 10.5" stroke="#bcbcbc" stroke-width="1.8"/><path d="M4.5 2.8 V6.2 M2.8 4.5 H6.2" stroke="#bcbcbc" stroke-width="0.8"/></svg>
<svg style="left:234px;top:132px;" width="11" height="12" viewBox="0 0 11 12"><path d="M0.5 1 H10.5 L6.5 6 V11 L4.5 9.5 V6Z" fill="#c3d1e4" stroke="#485a70" stroke-width="1"/></svg>
<div class="a" style="left:249px;top:133px;width:11px;height:11px;background:#eef0f2;border:1px solid #c9cdd2"></div>
<svg style="left:250px;top:134px;" width="9" height="9" viewBox="0 0 9 9"><path d="M1.5 4.5 L3.5 7 L7.5 2" fill="none" stroke="#b9bec4" stroke-width="1.1"/></svg>
<svg style="left:5px;top:150.5px;" width="6" height="5" viewBox="0 0 6 5"><path d="M0.3 0.5 H5.7 L3 4.2Z" fill="#666"/></svg>
<div class="t" style="left:15.00px;top:150.00px;font-size:8px;font-family:'Liberation Sans',sans-serif;font-weight:bold;font-style:normal;color:#202020;transform:scaleX(0.9032);">Format</div>
<div class="a" style="left:45.5px;top:151.5px;width:216.5px;height:1px;background:linear-gradient(90deg,#d9dde3,#e6e9ed 70%,rgba(240,240,240,0))"></div>
<div class="t" style="left:66.00px;top:161.00px;font-size:8px;font-family:'Liberation Sans',sans-serif;font-weight:normal;font-style:normal;color:#4e4e4e;transform:scaleX(0.9235);">Pen thickness</div>
<div class="t" style="left:80.00px;top:172.00px;font-size:8px;font-family:'Liberation Sans',sans-serif;font-weight:normal;font-style:normal;color:#4e4e4e;transform:scaleX(0.9856);">Line type</div>
<div class="t" style="left:79.00px;top:184.00px;font-size:8px;font-family:'Liberation Sans',sans-serif;font-weight:normal;font-style:normal;color:#4e4e4e;transform:scaleX(0.9514);">Line color</div>
<div class="t" style="left:94.00px;top:196.00px;font-size:8px;font-family:'Liberation Sans',sans-serif;font-weight:normal;font-style:normal;color:#4e4e4e;transform:scaleX(0.8993);">Layer</div>
<div class="t" style="left:63.00px;top:206.00px;font-size:8px;font-family:'Liberation Sans',sans-serif;font-weight:normal;font-style:normal;color:#4e4e4e;transform:scaleX(0.9417);">Pen from layer</div>
<div class="t" style="left:61.00px;top:218.00px;font-size:8px;font-family:'Liberation Sans',sans-serif;font-weight:normal;font-style:normal;color:#4e4e4e;transform:scaleX(0.9637);">Line from layer</div>
<div class="t" style="left:58.00px;top:229.00px;font-size:8px;font-family:'Liberation Sans',sans-serif;font-weight:normal;font-style:normal;color:#4e4e4e;transform:scaleX(0.9489);">Color from layer</div>
<div class="t" style="left:54.00px;top:240.00px;font-size:8px;font-family:'Liberation Sans',sans-serif;font-weight:normal;font-style:normal;color:#4e4e4e;transform:scaleX(0.9733);">Construction line</div>
<div class="t" style="left:81.00px;top:252.00px;font-size:8px;font-family:'Liberation Sans',sans-serif;font-weight:normal;font-style:normal;color:#4e4e4e;transform:scaleX(0.8604);">Sequence</div>
<div class="t" style="left:66.00px;top:263.00px;font-size:8px;font-family:'Liberation Sans',sans-serif;font-weight:normal;font-style:normal;color:#4e4e4e;transform:scaleX(0.8916);">Group number</div>
<svg style="left:118px;top:159px;" width="10" height="9" viewBox="0 0 10 9"><rect x="0" y="1" width="9" height="1.6" fill="#3b4d72"/><rect x="0" y="3.8" width="9" height="1.6" fill="#3b4d72"/><rect x="0" y="6.6" width="9" height="1.6" fill="#3b4d72"/></svg>
<svg style="left:118px;top:171px;" width="10" height="9" viewBox="0 0 10 9"><rect x="0" y="1" width="9" height="1.4" fill="#3b4d72"/><path d="M0 4.5 H9" stroke="#3b4d72" stroke-width="1.2" stroke-dasharray="1 1"/><rect x="0" y="6.5" width="9" height="1.4" fill="#3b4d72"/></svg>
<svg style="left:118px;top:182px;" width="10" height="10" viewBox="0 0 10 10"><defs><radialGradient id="cw"><stop offset="0" stop-color="#fff"/><stop offset="1" stop-color="#a9b"/></radialGradient></defs><circle cx="5" cy="5" r="4.6" fill="url(#cw)"/><path d="M5 0.4 A4.6 4.6 0 0 1 9.6 5 L5 5Z" fill="#e8a0a0"/><path d="M9.6 5 A4.6 4.6 0 0 1 5 9.6 L5 5Z" fill="#9ec8e8"/><path d="M5 9.6 A4.6 4.6 0 0 1 0.4 5 L5 5Z" fill="#c8e0a0"/><path d="M0.4 5 A4.6 4.6 0 0 1 5 0.4 L5 5Z" fill="#d8c0e8"/></svg>
<svg style="left:118px;top:193px;" width="10" height="11" viewBox="0 0 10 11"><path d="M5 0.5 L9.5 3 L5 5.5 L0.5 3Z" fill="#6f95c8" stroke="#3e6aa5" stroke-width="0.7"/><path d="M0.5 5 L5 7.5 L9.5 5 M0.5 7 L5 9.5 L9.5 7" fill="none" stroke="#3e6aa5" stroke-width="1.2"/></svg>
<svg style="left:118px;top:204px;" width="10" height="11" viewBox="0 0 10 11"><rect x="1" y="0.5" width="8" height="5" fill="#4f6a94"/><path d="M1 6 H9 L5 10Z" fill="#7b9cc8"/></svg>
<svg style="left:118px;top:216px;" width="10" height="11" viewBox="0 0 10 11"><rect x="1" y="0.5" width="8" height="5" fill="#4f6a94"/><path d="M1 6 H9 L5 10Z" fill="#7b9cc8"/></svg>
<svg style="left:118px;top:227px;" width="10" height="11" viewBox="0 0 10 11"><rect x="1" y="0.5" width="8" height="5" fill="#4f6a94"/><path d="M1 6 H9 L5 10Z" fill="#7b9cc8"/></svg>
<svg style="left:118px;top:238px;" width="10" height="11" viewBox="0 0 10 11"><path d="M1 1 V10 H9" fill="none" stroke="#444" stroke-width="0.9" stroke-dasharray="1.2 0.8"/><path d="M3 8 L8 2 L9.5 3.5 L4.5 9Z" fill="#5576a8"/></svg>
<svg style="left:117px;top:249px;" width="12" height="12" viewBox="0 0 12 12"><rect x="0.5" y="0.5" width="7" height="7" fill="#dde6f2" stroke="#6f86a8"/><rect x="5" y="5" width="6" height="6" fill="#f5f7fa" stroke="#6f86a8"/></svg>
<svg style="left:117px;top:260px;" width="12" height="12" viewBox="0 0 12 12"><rect x="2" y="2" width="8" height="8" fill="none" stroke="#6f86a8" stroke-dasharray="1.5 1"/><rect x="0.5" y="0.5" width="3" height="3" fill="#46608a"/><rect x="8" y="8" width="3.5" height="3.5" fill="#46608a"/></svg>
<div class="t" style="left:135.00px;top:161.00px;font-size:8px;font-family:'Liberation Sans',sans-serif;font-weight:normal;font-style:normal;color:#1a1a1a;transform:scaleX(0.8987);">0.25</div>
<div class="a" style="left:157px;top:163px;width:103px;height:1px;background:#222"></div>
<div class="t" style="left:135.00px;top:172.00px;font-size:8px;font-family:'Liberation Sans',sans-serif;font-weight:normal;font-style:normal;color:#1a1a1a;transform:scaleX(0.8982);">1</div>
<div class="a" style="left:147px;top:175px;width:62px;height:1px;background:#333"></div>
<div class="t" style="left:135.00px;top:184.00px;font-size:8px;font-family:'Liberation Sans',sans-serif;font-weight:normal;font-style:normal;color:#1a1a1a;transform:scaleX(0.8982);">1</div>
<div class="a" style="left:150px;top:183px;width:110px;height:8px;background:#050505"></div>
<div class="t" style="left:135.00px;top:196.00px;font-size:8px;font-family:'Liberation Sans',sans-serif;font-weight:normal;font-style:normal;color:#1a1a1a;transform:scaleX(0.9174);">BR_GEN (Bar reinforcement, general)</div>
<div class="a" style="left:135px;top:205px;width:9px;height:9px;background:linear-gradient(#f3f6fa,#dfe6ef);border:1px solid #9aa7b8"></div>
<div class="a" style="left:135px;top:217px;width:9px;height:9px;background:linear-gradient(#f3f6fa,#dfe6ef);border:1px solid #9aa7b8"></div>
<div class="a" style="left:135px;top:228px;width:9px;height:9px;background:linear-gradient(#f3f6fa,#dfe6ef);border:1px solid #9aa7b8"></div>
<div class="a" style="left:135px;top:239px;width:9px;height:9px;background:linear-gradient(#f3f6fa,#dfe6ef);border:1px solid #9aa7b8"></div>
<div class="t" style="left:136.00px;top:252.00px;font-size:8px;font-family:'Liberation Sans',sans-serif;font-weight:normal;font-style:normal;color:#c4c4c4;transform:scaleX(0.8982);">0</div>
<div class="t" style="left:135.00px;top:263.00px;font-size:8px;font-family:'Liberation Sans',sans-serif;font-weight:normal;font-style:normal;color:#c4c4c4;transform:scaleX(0.8982);">321</div>
<svg style="left:5px;top:275.5px;" width="6" height="5" viewBox="0 0 6 5"><path d="M0.3 0.5 H5.7 L3 4.2Z" fill="#666"/></svg>
<div class="t" style="left:15.00px;top:274.00px;font-size:8px;font-family:'Liberation Sans',sans-serif;font-weight:bold;font-style:normal;color:#202020;transform:scaleX(0.8675);">Element</div>
<div class="a" style="left:48px;top:276.5px;width:187px;height:1px;background:linear-gradient(90deg,#d9dde3,#e6e9ed 70%,rgba(240,240,240,0))"></div>
<div class="t" style="left:73.00px;top:286.00px;font-size:8px;font-family:'Liberation Sans',sans-serif;font-weight:normal;font-style:normal;color:#4e4e4e;transform:scaleX(0.9637);">Pattern line</div>
<svg style="left:119px;top:283px;" width="8" height="12" viewBox="0 0 8 12"><path d="M1 1 H7 M1 4 H7 M1 7 H7 M1 10 H7" stroke="#445" stroke-width="0.9"/><path d="M1 1 V10 M7 1 V10" stroke="#445" stroke-width="1.2" stroke-dasharray="1.5 1.5"/></svg>
<div class="a" style="left:135px;top:285px;width:9px;height:9px;background:linear-gradient(#f3f6fa,#dfe6ef);border:1px solid #9aa7b8"></div>
<svg style="left:5px;top:298px;" width="6" height="5" viewBox="0 0 6 5"><path d="M0.3 0.5 H5.7 L3 4.2Z" fill="#666"/></svg>
<div class="t" style="left:15.00px;top:297.00px;font-size:8px;font-family:'Liberation Sans',sans-serif;font-weight:bold;font-style:normal;color:#202020;transform:scaleX(0.9457);">Document</div>
<div class="a" style="left:58px;top:299px;width:177px;height:1px;background:linear-gradient(90deg,#d9dde3,#e6e9ed 70%,rgba(240,240,240,0))"></div>
<div class="t" style="left:94.00px;top:308.00px;font-size:8px;font-family:'Liberation Sans',sans-serif;font-weight:normal;font-style:normal;color:#4e4e4e;transform:scaleX(0.9323);">Document</div>
<div class="t" style="left:135.50px;top:308.00px;font-size:8px;font-family:'Liberation Sans',sans-serif;font-weight:normal;font-style:normal;color:#b0b0b0;transform:scaleX(0.9267);">DF28 - Column Pad Ftgs</div>
<div class="t" style="left:77.00px;top:320.00px;font-size:8px;font-family:'Liberation Sans',sans-serif;font-weight:normal;font-style:normal;color:#4e4e4e;transform:scaleX(0.9477);">Document type</div>
<div class="t" style="left:135.50px;top:320.00px;font-size:8px;font-family:'Liberation Sans',sans-serif;font-weight:normal;font-style:normal;color:#b0b0b0;transform:scaleX(0.9349);">3D Bar Reinforcement</div>
<div class="t" style="left:112.00px;top:331.00px;font-size:8px;font-family:'Liberation Sans',sans-serif;font-weight:normal;font-style:normal;color:#4e4e4e;transform:scaleX(0.9715);">Path</div>
<div class="t" style="left:135.50px;top:331.00px;font-size:8px;font-family:'Liberation Sans',sans-serif;font-weight:normal;font-style:normal;color:#b0b0b0;transform:scaleX(0.9426);">\\DBREWSTER\c\data\allplan\allplan :</div>
<div class="t" style="left:102.00px;top:342.00px;font-size:8px;font-family:'Liberation Sans',sans-serif;font-weight:normal;font-style:normal;color:#4e4e4e;transform:scaleX(0.8860);">File size</div>
<div class="t" style="left:135.50px;top:342.00px;font-size:8px;font-family:'Liberation Sans',sans-serif;font-weight:normal;font-style:normal;color:#b0b0b0;transform:scaleX(0.8817);">2048 KB (2097342 bytes)</div>
<div class="t" style="left:90.00px;top:354.00px;font-size:8px;font-family:'Liberation Sans',sans-serif;font-weight:normal;font-style:normal;color:#4e4e4e;transform:scaleX(0.9597);">Created on</div>
<div class="t" style="left:135.50px;top:354.00px;font-size:8px;font-family:'Liberation Sans',sans-serif;font-weight:normal;font-style:normal;color:#b0b0b0;transform:scaleX(0.9203);">06/04/20, 9:00:04 AM</div>
<div class="t" style="left:86.00px;top:365.00px;font-size:8px;font-family:'Liberation Sans',sans-serif;font-weight:normal;font-style:normal;color:#4e4e4e;transform:scaleX(0.9634);">Changed on</div>
<div class="t" style="left:135.50px;top:365.00px;font-size:8px;font-family:'Liberation Sans',sans-serif;font-weight:normal;font-style:normal;color:#b0b0b0;transform:scaleX(0.9203);">06/04/20, 9:56:52 AM</div>
<div class="t" style="left:112.00px;top:376.00px;font-size:8px;font-family:'Liberation Sans',sans-serif;font-weight:normal;font-style:normal;color:#4e4e4e;transform:scaleX(0.9473);">User</div>
<div class="t" style="left:135.50px;top:376.00px;font-size:8px;font-family:'Liberation Sans',sans-serif;font-weight:normal;font-style:normal;color:#b0b0b0;transform:scaleX(0.9856);">dbrewste</div>
<div class="t" style="left:82.00px;top:388.00px;font-size:8px;font-family:'Liberation Sans',sans-serif;font-weight:normal;font-style:normal;color:#4e4e4e;transform:scaleX(0.9491);">Display mode</div>
<div class="t" style="left:76.00px;top:399.00px;font-size:8px;font-family:'Liberation Sans',sans-serif;font-weight:normal;font-style:normal;color:#4e4e4e;transform:scaleX(0.9356);">Hierarchic code</div>
<svg style="left:5px;top:411px;" width="6" height="5" viewBox="0 0 6 5"><path d="M0.3 0.5 H5.7 L3 4.2Z" fill="#666"/></svg>
<div class="t" style="left:73.00px;top:410.00px;font-size:8px;font-family:'Liberation Sans',sans-serif;font-weight:normal;font-style:normal;color:#4e4e4e;transform:scaleX(0.9516);">Minimum values</div>
<div class="t" style="left:123.50px;top:422.00px;font-size:8px;font-family:'Liberation Sans',sans-serif;font-weight:normal;font-style:normal;color:#4e4e4e;transform:scaleX(0.8421);">X</div>
<div class="t" style="left:135.50px;top:422.00px;font-size:8px;font-family:'Liberation Sans',sans-serif;font-weight:normal;font-style:normal;color:#b0b0b0;transform:scaleX(0.9139);">-1886.4194</div>
<div class="t" style="left:123.50px;top:433.00px;font-size:8px;font-family:'Liberation Sans',sans-serif;font-weight:normal;font-style:normal;color:#4e4e4e;transform:scaleX(0.8421);">Y</div>
<div class="t" style="left:135.50px;top:433.00px;font-size:8px;font-family:'Liberation Sans',sans-serif;font-weight:normal;font-style:normal;color:#b0b0b0;transform:scaleX(0.8550);">-1416</div>
<div class="t" style="left:123.50px;top:444.00px;font-size:8px;font-family:'Liberation Sans',sans-serif;font-weight:normal;font-style:normal;color:#4e4e4e;transform:scaleX(0.9201);">Z</div>
<div class="t" style="left:135.50px;top:444.00px;font-size:8px;font-family:'Liberation Sans',sans-serif;font-weight:normal;font-style:normal;color:#b0b0b0;transform:scaleX(0.8741);">-120</div>
<svg style="left:5px;top:456px;" width="6" height="5" viewBox="0 0 6 5"><path d="M0.3 0.5 H5.7 L3 4.2Z" fill="#666"/></svg>
<div class="t" style="left:72.00px;top:456.00px;font-size:8px;font-family:'Liberation Sans',sans-serif;font-weight:normal;font-style:normal;color:#4e4e4e;transform:scaleX(0.9331);">Maximum values</div>
<div class="t" style="left:123.50px;top:467.00px;font-size:8px;font-family:'Liberation Sans',sans-serif;font-weight:normal;font-style:normal;color:#4e4e4e;transform:scaleX(0.8421);">X</div>
<div class="t" style="left:135.50px;top:467.00px;font-size:8px;font-family:'Liberation Sans',sans-serif;font-weight:normal;font-style:normal;color:#b0b0b0;transform:scaleX(0.8982);">0</div>
<div class="t" style="left:123.50px;top:478.00px;font-size:8px;font-family:'Liberation Sans',sans-serif;font-weight:normal;font-style:normal;color:#4e4e4e;transform:scaleX(0.8421);">Y</div>
<div class="t" style="left:135.50px;top:478.00px;font-size:8px;font-family:'Liberation Sans',sans-serif;font-weight:normal;font-style:normal;color:#b0b0b0;transform:scaleX(0.8990);">21.0632</div>
<div class="t" style="left:123.50px;top:490.00px;font-size:8px;font-family:'Liberation Sans',sans-serif;font-weight:normal;font-style:normal;color:#4e4e4e;transform:scaleX(0.9201);">Z</div>
<div class="t" style="left:135.50px;top:490.00px;font-size:8px;font-family:'Liberation Sans',sans-serif;font-weight:normal;font-style:normal;color:#b0b0b0;transform:scaleX(0.8982);">0</div>
<svg style="left:5px;top:502px;" width="6" height="5" viewBox="0 0 6 5"><path d="M0.3 0.5 H5.7 L3 4.2Z" fill="#666"/></svg>
<div class="t" style="left:15.00px;top:501.00px;font-size:8px;font-family:'Liberation Sans',sans-serif;font-weight:bold;font-style:normal;color:#202020;transform:scaleX(0.9032);">Project</div>
<div class="a" style="left:45.5px;top:503px;width:189.5px;height:1px;background:linear-gradient(90deg,#d9dde3,#e6e9ed 70%,rgba(240,240,240,0))"></div>
<div class="t" style="left:102.00px;top:512.00px;font-size:8px;font-family:'Liberation Sans',sans-serif;font-weight:normal;font-style:normal;color:#4e4e4e;transform:scaleX(0.9964);">x-offset</div>
<div class="t" style="left:135.50px;top:512.00px;font-size:8px;font-family:'Liberation Sans',sans-serif;font-weight:normal;font-style:normal;color:#b0b0b0;transform:scaleX(0.8982);">0</div>
<div class="t" style="left:102.00px;top:524.00px;font-size:8px;font-family:'Liberation Sans',sans-serif;font-weight:normal;font-style:normal;color:#4e4e4e;transform:scaleX(0.9964);">y-offset</div>
<div class="t" style="left:135.50px;top:524.00px;font-size:8px;font-family:'Liberation Sans',sans-serif;font-weight:normal;font-style:normal;color:#b0b0b0;transform:scaleX(0.8982);">0</div>
<div class="t" style="left:102.00px;top:535.00px;font-size:8px;font-family:'Liberation Sans',sans-serif;font-weight:normal;font-style:normal;color:#4e4e4e;transform:scaleX(0.9964);">z-offset</div>
<div class="t" style="left:135.50px;top:535.00px;font-size:8px;font-family:'Liberation Sans',sans-serif;font-weight:normal;font-style:normal;color:#b0b0b0;transform:scaleX(0.8982);">0</div>
<div class="a" style="left:3px;top:601px;width:259px;height:1px;background:#d5d9de"></div>
<div class="a" style="left:2px;top:641px;width:264px;height:19px;background:linear-gradient(#e9eff7,#dfe7f2);border-top:1px solid #d3dbe6"></div>
<svg style="left:5px;top:644px;" width="10" height="12" viewBox="0 0 10 12"><path d="M1 11 L6 5 M5 3 L8 0.5 L9.5 2 L7 5Z" stroke="#56667a" stroke-width="1.3" fill="#56667a"/></svg>
<svg style="left:17px;top:643px;" width="13" height="13" viewBox="0 0 13 13"><path d="M1 5 H5 L6 6 H11 V11 H1Z" fill="none" stroke="#56667a" stroke-width="1"/><path d="M7 1 L8 3 L10.5 3.5 L8.5 5 L9 7.5 L7 6 L5 7.5 L5.5 5 L3.5 3.5 L6 3Z" fill="#dbe4ef" stroke="#56667a" stroke-width="0.8"/></svg>
<svg style="left:32px;top:643px;" width="13" height="13" viewBox="0 0 13 13"><rect x="1" y="5" width="8" height="7" fill="none" stroke="#56667a"/><path d="M8 1 L9 3 L11.5 3.5 L9.5 5 L10 7.5 L8 6 L6 7.5 L6.5 5 L4.5 3.5 L7 3Z" fill="#8aa5cc" stroke="#56667a" stroke-width="0.8"/></svg>
<div class="a" style="left:47px;top:643px;width:215px;height:15px;background:#fff;border:1px solid #c9d3e0"></div>
<div class="a" style="left:250px;top:644px;width:11px;height:13px;background:linear-gradient(#f4f7fb,#dbe4ef);border-left:1px solid #c9d3e0"></div>
<div class="t" style="left:254.00px;top:648.00px;font-size:6px;font-family:'Liberation Sans',sans-serif;font-weight:normal;font-style:normal;color:#222;">▾</div>
<div class="a" style="left:267px;top:97px;width:3px;height:563px;background:#eef1f5"></div>
<div class="a" style="left:270px;top:97px;width:478px;height:563px;background:#a6a6a6"></div>
<div class="a" style="left:270px;top:128px;width:451px;height:468px;background:#fefefe"></div>
<div class="a" style="left:492px;top:99px;width:35px;height:16px;background:#cfd0d6"></div>
<div class="t" style="left:498.00px;top:104.00px;font-size:8.6px;font-family:'Liberation Sans',sans-serif;font-weight:normal;font-style:normal;color:#8c8d94;transform:scaleX(0.9846);">Plan:1</div>
<svg style="left:0px;top:0px;" width="1279" height="720" viewBox="0 0 1279 720"><rect x="326.5" y="200.5" width="373" height="250" fill="none" stroke="#3a3a3a" stroke-width="1"/><rect x="330.8" y="205" width="365" height="241" fill="none" stroke="#1f1f1f" stroke-width="1.7"/><rect x="330.8" y="233.2" width="364.99999999999994" height="1.6" fill="#2b2b2b"/><rect x="330.8" y="258.0" width="364.99999999999994" height="1.6" fill="#2b2b2b"/><rect x="330.8" y="279.05" width="364.99999999999994" height="1.1" fill="#444"/><rect x="330.8" y="299.85" width="364.99999999999994" height="1.1" fill="#444"/><rect x="330.8" y="320.65000000000003" width="364.99999999999994" height="1.1" fill="#444"/><rect x="330.8" y="341.45" width="364.99999999999994" height="1.1" fill="#444"/><rect x="330.8" y="362.25" width="364.99999999999994" height="1.1" fill="#444"/><rect x="330.8" y="383.05" width="364.99999999999994" height="1.1" fill="#444"/><rect x="330.8" y="403.84999999999997" width="364.99999999999994" height="1.1" fill="#444"/><rect x="330.8" y="424.65000000000003" width="364.99999999999994" height="1.1" fill="#444"/><rect x="388.0" y="234" width="1.2" height="212" fill="#3a3a3a"/><rect x="488.0" y="234" width="1.2" height="212" fill="#3a3a3a"/><rect x="591.9" y="234" width="1.2" height="212" fill="#3a3a3a"/></svg>
<div class="t" style="left:446.00px;top:213.00px;font-size:14px;font-family:'Liberation Sans',sans-serif;font-weight:bold;font-style:italic;color:#111;transform:scaleX(0.9262);">FOOTING SCHEDULE</div>
<div class="t" style="left:335.00px;top:242.00px;font-size:11.5px;font-family:'Liberation Sans',sans-serif;font-weight:bold;font-style:italic;color:#111;transform:scaleX(0.9162);">FOOTING</div>
<div class="t" style="left:427.50px;top:242.00px;font-size:11.5px;font-family:'Liberation Sans',sans-serif;font-weight:bold;font-style:italic;color:#111;transform:scaleX(0.8411);">SIZE</div>
<div class="t" style="left:504.50px;top:242.00px;font-size:11.5px;font-family:'Liberation Sans',sans-serif;font-weight:bold;font-style:italic;color:#111;transform:scaleX(0.8882);">REINFORCING</div>
<div class="t" style="left:619.40px;top:242.00px;font-size:11.5px;font-family:'Liberation Sans',sans-serif;font-weight:bold;font-style:italic;color:#111;transform:scaleX(0.8359);">REMARKS</div>
<div class="t" style="left:351.10px;top:266.00px;font-size:8.8px;font-family:'Liberation Sans',sans-serif;font-weight:normal;font-style:italic;color:#1a1a1a;transform:scaleX(0.9540);-webkit-text-stroke:0.35px #1a1a1a;">F5.0</div>
<div class="t" style="left:400.70px;top:266.00px;font-size:8.8px;font-family:'Liberation Sans',sans-serif;font-weight:normal;font-style:italic;color:#1a1a1a;transform:scaleX(0.9558);-webkit-text-stroke:0.35px #1a1a1a;">5&#x27;-0&quot; x 5&#x27;-0&quot; x 1&#x27;-6&quot;d.</div>
<div class="t" style="left:506.40px;top:266.00px;font-size:8.8px;font-family:'Liberation Sans',sans-serif;font-weight:normal;font-style:italic;color:#1a1a1a;transform:scaleX(0.9279);-webkit-text-stroke:0.35px #1a1a1a;">5-#7b. EACH WAY</div>
<div class="t" style="left:351.10px;top:286.00px;font-size:8.8px;font-family:'Liberation Sans',sans-serif;font-weight:normal;font-style:italic;color:#1a1a1a;transform:scaleX(0.9540);-webkit-text-stroke:0.35px #1a1a1a;">F6.0</div>
<div class="t" style="left:400.70px;top:286.00px;font-size:8.8px;font-family:'Liberation Sans',sans-serif;font-weight:normal;font-style:italic;color:#1a1a1a;transform:scaleX(0.9558);-webkit-text-stroke:0.35px #1a1a1a;">6&#x27;-0&quot; x 6&#x27;-0&quot; x 2&#x27;-0&quot;d.</div>
<div class="t" style="left:506.40px;top:286.00px;font-size:8.8px;font-family:'Liberation Sans',sans-serif;font-weight:normal;font-style:italic;color:#1a1a1a;transform:scaleX(0.9279);-webkit-text-stroke:0.35px #1a1a1a;">6-#7b. EACH WAY</div>
<div class="t" style="left:351.10px;top:307.00px;font-size:8.8px;font-family:'Liberation Sans',sans-serif;font-weight:normal;font-style:italic;color:#1a1a1a;transform:scaleX(0.9540);-webkit-text-stroke:0.35px #1a1a1a;">F6.5</div>
<div class="t" style="left:400.70px;top:307.00px;font-size:8.8px;font-family:'Liberation Sans',sans-serif;font-weight:normal;font-style:italic;color:#1a1a1a;transform:scaleX(0.9558);-webkit-text-stroke:0.35px #1a1a1a;">6&#x27;-6&quot; x 6&#x27;-6&quot; x 2&#x27;-0&quot;d.</div>
<div class="t" style="left:506.40px;top:307.00px;font-size:8.8px;font-family:'Liberation Sans',sans-serif;font-weight:normal;font-style:italic;color:#1a1a1a;transform:scaleX(0.9279);-webkit-text-stroke:0.35px #1a1a1a;">5-#8b. EACH WAY</div>
<div class="t" style="left:351.10px;top:328.00px;font-size:8.8px;font-family:'Liberation Sans',sans-serif;font-weight:normal;font-style:italic;color:#1a1a1a;transform:scaleX(0.9540);-webkit-text-stroke:0.35px #1a1a1a;">F7.0</div>
<div class="t" style="left:400.70px;top:328.00px;font-size:8.8px;font-family:'Liberation Sans',sans-serif;font-weight:normal;font-style:italic;color:#1a1a1a;transform:scaleX(0.9558);-webkit-text-stroke:0.35px #1a1a1a;">7&#x27;-0&quot; x 7&#x27;-0&quot; x 2&#x27;-0&quot;d.</div>
<div class="t" style="left:506.40px;top:328.00px;font-size:8.8px;font-family:'Liberation Sans',sans-serif;font-weight:normal;font-style:italic;color:#1a1a1a;transform:scaleX(0.9279);-webkit-text-stroke:0.35px #1a1a1a;">6-#8b. EACH WAY</div>
<div class="t" style="left:351.10px;top:349.00px;font-size:8.8px;font-family:'Liberation Sans',sans-serif;font-weight:normal;font-style:italic;color:#1a1a1a;transform:scaleX(0.9540);-webkit-text-stroke:0.35px #1a1a1a;">F7.5</div>
<div class="t" style="left:400.70px;top:349.00px;font-size:8.8px;font-family:'Liberation Sans',sans-serif;font-weight:normal;font-style:italic;color:#1a1a1a;transform:scaleX(0.9558);-webkit-text-stroke:0.35px #1a1a1a;">7&#x27;-6&quot; x 7&#x27;-6&quot; x 2&#x27;-0&quot;d.</div>
<div class="t" style="left:506.40px;top:349.00px;font-size:8.8px;font-family:'Liberation Sans',sans-serif;font-weight:normal;font-style:italic;color:#1a1a1a;transform:scaleX(0.9279);-webkit-text-stroke:0.35px #1a1a1a;">7-#8b. EACH WAY</div>
<div class="t" style="left:351.10px;top:370.00px;font-size:8.8px;font-family:'Liberation Sans',sans-serif;font-weight:normal;font-style:italic;color:#1a1a1a;transform:scaleX(0.9540);-webkit-text-stroke:0.35px #1a1a1a;">F9.0</div>
<div class="t" style="left:400.70px;top:370.00px;font-size:8.8px;font-family:'Liberation Sans',sans-serif;font-weight:normal;font-style:italic;color:#1a1a1a;transform:scaleX(0.9558);-webkit-text-stroke:0.35px #1a1a1a;">9&#x27;-0&quot; x 9&#x27;-0&quot; x 2&#x27;-6&quot;d.</div>
<div class="t" style="left:506.40px;top:370.00px;font-size:8.8px;font-family:'Liberation Sans',sans-serif;font-weight:normal;font-style:italic;color:#1a1a1a;transform:scaleX(0.9279);-webkit-text-stroke:0.35px #1a1a1a;">8-#8b. EACH WAY</div>
<div class="t" style="left:339.40px;top:461.00px;font-size:11px;font-family:'Liberation Sans',sans-serif;font-weight:bold;font-style:italic;color:#111;transform:scaleX(0.9523);">NOTE:</div>
<div class="t" style="left:329.00px;top:478.00px;font-size:8.5px;font-family:'Liberation Sans',sans-serif;font-weight:normal;font-style:italic;color:#1a1a1a;transform:scaleX(0.7753);-webkit-text-stroke:0.35px #1a1a1a;">1.</div>
<div class="t" style="left:341.00px;top:478.00px;font-size:8.5px;font-family:'Liberation Sans',sans-serif;font-weight:normal;font-style:italic;color:#1a1a1a;transform:scaleX(0.8729);-webkit-text-stroke:0.35px #1a1a1a;">SPREAD FOOTINGS ARE CENTERED BELOW COLUMNS UNLESS SHOWN OTHERWISE ON PLANS.</div>
<div class="t" style="left:329.00px;top:499.00px;font-size:8.5px;font-family:'Liberation Sans',sans-serif;font-weight:normal;font-style:italic;color:#1a1a1a;transform:scaleX(0.7753);-webkit-text-stroke:0.35px #1a1a1a;">2.</div>
<div class="t" style="left:341.00px;top:499.00px;font-size:8.5px;font-family:'Liberation Sans',sans-serif;font-weight:normal;font-style:italic;color:#1a1a1a;transform:scaleX(0.8970);-webkit-text-stroke:0.35px #1a1a1a;">ABBREVIATIONS:</div>
<div class="t" style="left:415.00px;top:499.00px;font-size:8.5px;font-family:'Liberation Sans',sans-serif;font-weight:normal;font-style:italic;color:#1a1a1a;transform:scaleX(0.9961);-webkit-text-stroke:0.35px #1a1a1a;">t. = TOP, b. = BOTTOM</div>
<div class="t" style="left:329.00px;top:520.00px;font-size:8.5px;font-family:'Liberation Sans',sans-serif;font-weight:normal;font-style:italic;color:#1a1a1a;transform:scaleX(0.7753);-webkit-text-stroke:0.35px #1a1a1a;">3.</div>
<div class="t" style="left:341.00px;top:520.00px;font-size:8.5px;font-family:'Liberation Sans',sans-serif;font-weight:normal;font-style:italic;color:#1a1a1a;transform:scaleX(0.9171);-webkit-text-stroke:0.35px #1a1a1a;">REF. S3.10 FOR MAT FOOTINGS.</div>
<div class="t" style="left:271.00px;top:562.00px;font-size:17.5px;font-family:'Liberation Sans',sans-serif;font-weight:bold;font-style:italic;color:#111;transform:scaleX(0.8772);">TING DETAIL &amp; SCHEDULE</div>
<svg style="left:0px;top:0px;" width="1279" height="720" viewBox="0 0 1279 720"><rect x="271" y="578.7" width="242" height="1" fill="#333"/><rect x="271" y="584.6" width="167" height="2" fill="#111"/><rect x="492" y="585.0" width="16" height="2" fill="#111"/><rect x="287.95" y="217" width="1.1" height="214" fill="#333"/><rect x="271" y="328.95" width="25" height="1.1" fill="#333"/><path d="M285.5 326.0 L292 333.0" stroke="#222" stroke-width="1.2"/><rect x="271" y="362.95" width="25" height="1.1" fill="#333"/><path d="M285.5 360.0 L292 367.0" stroke="#222" stroke-width="1.2"/><rect x="271" y="424.95" width="25" height="1.1" fill="#333"/><path d="M285.5 422.0 L292 429.0" stroke="#222" stroke-width="1.2"/><rect x="270.0" y="128" width="1" height="468" fill="#8a8a8a"/></svg>
<div class="t" style="left:458.50px;top:584.00px;font-size:7px;font-family:'Liberation Sans',sans-serif;font-weight:normal;font-style:italic;color:#1a1a1a;transform:scaleX(1.0714);-webkit-text-stroke:0.35px #1a1a1a;">NTS</div>
<div class="t" style="left:271.00px;top:199.00px;font-size:8px;font-family:'Liberation Sans',sans-serif;font-weight:normal;font-style:italic;color:#1a1a1a;transform:scaleX(0.8996);-webkit-text-stroke:0.35px #1a1a1a;">ULE</div>
<div class="a" style="left:274.5px;top:305.2px;width:0;height:0"><div style="position:absolute;left:0;top:0;white-space:nowrap;line-height:1;font-size:9px;font-family:'Liberation Sans',sans-serif;font-weight:normal;font-style:italic;color:#1a1a1a;transform:rotate(-90deg) scaleX(0.9782) translate(-50%,-50%);transform-origin:0 0;-webkit-text-stroke:0.35px #1a1a1a;">8&quot; MIN.,</div></div>
<div class="a" style="left:283.6px;top:270.3px;width:0;height:0"><div style="position:absolute;left:0;top:0;white-space:nowrap;line-height:1;font-size:9px;font-family:'Liberation Sans',sans-serif;font-weight:normal;font-style:italic;color:#1a1a1a;transform:rotate(-90deg) scaleX(0.8713) translate(-50%,-50%);transform-origin:0 0;-webkit-text-stroke:0.35px #1a1a1a;">COORDINATE w/ UTILITIES</div></div>
<div class="a" style="left:274.4px;top:394px;width:0;height:0"><div style="position:absolute;left:0;top:0;white-space:nowrap;line-height:1;font-size:9px;font-family:'Liberation Sans',sans-serif;font-weight:normal;font-style:italic;color:#1a1a1a;transform:rotate(-90deg) scaleX(0.8481) translate(-50%,-50%);transform-origin:0 0;-webkit-text-stroke:0.35px #1a1a1a;">DEPTH,</div></div>
<div class="a" style="left:283.8px;top:395.8px;width:0;height:0"><div style="position:absolute;left:0;top:0;white-space:nowrap;line-height:1;font-size:9px;font-family:'Liberation Sans',sans-serif;font-weight:normal;font-style:italic;color:#1a1a1a;transform:rotate(-90deg) scaleX(0.8145) translate(-50%,-50%);transform-origin:0 0;-webkit-text-stroke:0.35px #1a1a1a;">REF. SCHED.</div></div>
<svg style="left:275px;top:642px;" width="14" height="14" viewBox="0 0 14 14"><circle cx="7" cy="7" r="6.5" fill="#f6f6f6"/><circle cx="7" cy="7" r="4.6" fill="none" stroke="#888" stroke-width="1" stroke-dasharray="1.2 1.6"/><rect x="5.3" y="5.3" width="3.4" height="3.4" fill="#e0664f"/></svg>
<div class="a" style="left:748px;top:97px;width:2px;height:563px;background:#efefef"></div>
<div class="a" style="left:750px;top:97px;width:1px;height:563px;background:#cdcdcd"></div>
<div class="a" style="left:750px;top:97px;width:529px;height:563px;background:#a6a6a6"></div>
<svg style="left:750px;top:97px" width="529" height="563" viewBox="750 97 529 563"><rect x="821.5" y="162.5" width="379" height="448.5" stroke="#2e2e2e" stroke-width="1.2" fill="none"/><path d="M829.5 175 H1200 M829.5 175 V604 H1193 V175" fill="none" stroke="#454545" stroke-width="1.3"/><path d="M824.5 167 H1197 V607.5 H824.5Z" fill="none" stroke="#5bbde0" stroke-width="1.8"/><path d="M853 167 V171 H860 V167" fill="none" stroke="#5bbde0" stroke-width="1.5"/><path d="M1175 167 V171 H1183 V167" fill="none" stroke="#5bbde0" stroke-width="1.5"/><rect x="855" y="170" width="6" height="2.5" fill="#d86fd0"/><rect x="969" y="171" width="6" height="2.5" fill="#d86fd0"/><rect x="1067" y="168" width="6" height="2.5" fill="#d86fd0"/><rect x="1175" y="171.5" width="6" height="2.5" fill="#d86fd0"/><rect x="947" y="606" width="6" height="2.5" fill="#d86fd0"/><rect x="1060" y="606" width="6" height="2.5" fill="#d86fd0"/><rect x="997.5" y="175" width="6.5" height="77" fill="#5bbde0" stroke="#2e2e2e" stroke-width="1"/><line x1="997.5" y1="182" x2="1004" y2="182" stroke="#2e2e2e" stroke-width="1.2"/><line x1="997.5" y1="198" x2="1004" y2="198" stroke="#2e2e2e" stroke-width="1.2"/><line x1="997.5" y1="213" x2="1004" y2="213" stroke="#2e2e2e" stroke-width="1.2"/><line x1="821.5" y1="387" x2="829.5" y2="387" stroke="#2e2e2e" stroke-width="1"/><line x1="821.5" y1="402" x2="829.5" y2="402" stroke="#2e2e2e" stroke-width="1"/><line x1="821.5" y1="418" x2="829.5" y2="418" stroke="#2e2e2e" stroke-width="1"/><line x1="1193" y1="294" x2="1200.5" y2="294" stroke="#2e2e2e" stroke-width="1"/><line x1="1193" y1="311" x2="1200.5" y2="311" stroke="#2e2e2e" stroke-width="1"/><line x1="1193" y1="327" x2="1200.5" y2="327" stroke="#2e2e2e" stroke-width="1"/><rect x="949.5" y="252.5" width="79" height="276.5" stroke="#2e2e2e" stroke-width="1.1" fill="none"/><rect x="1104.5" y="342.5" width="96" height="96" stroke="#2e2e2e" stroke-width="1.1" fill="none"/><path d="M1007 309 V258.5 H973 V322.5 H1008" fill="none" stroke="#5bbde0" stroke-width="3.8"/><path d="M1007 309 V258.5 H973 V322.5 H1008" fill="none" stroke="#a9c9d4" stroke-width="1.2"/><path d="M962 409 V322.5 H973" fill="none" stroke="#5bbde0" stroke-width="3.8"/><path d="M962 409 V322.5 H973" fill="none" stroke="#a9c9d4" stroke-width="1.2"/><path d="M983 428 V351 H1019 V432" fill="none" stroke="#5bbde0" stroke-width="3.8"/><path d="M983 428 V351 H1019 V432" fill="none" stroke="#a9c9d4" stroke-width="1.2"/><path d="M962 428 V459 H1008" fill="none" stroke="#5bbde0" stroke-width="3.8"/><path d="M962 428 V459 H1008" fill="none" stroke="#a9c9d4" stroke-width="1.2"/><path d="M962 430 H1019" fill="none" stroke="#5bbde0" stroke-width="3.8"/><path d="M962 430 H1019" fill="none" stroke="#a9c9d4" stroke-width="1.2"/><path d="M1007 472 V522.5 H973 V459" fill="none" stroke="#5bbde0" stroke-width="3.8"/><path d="M1007 472 V522.5 H973 V459" fill="none" stroke="#a9c9d4" stroke-width="1.2"/><path d="M986 428 V353 H1016 V428 Z" fill="none" stroke="#4caf50" stroke-width="1.6"/><rect x="1011.5" y="387.5" width="5" height="6" fill="#c55" stroke="#111" stroke-width="0.8"/><rect x="1058" y="363" width="4" height="56" fill="#5aa04a"/><path d="M1058 363 V419 M1062 363 V419" stroke="#c9b44a" stroke-width="0.8" stroke-dasharray="2 1"/><rect x="865" y="222" width="29" height="29" fill="#a0a0a0" stroke="#222" stroke-width="1.2"/><line x1="869.8333333333334" y1="222" x2="869.8333333333334" y2="251" stroke="#2e2e2e" stroke-width="0.9"/><line x1="874.6666666666666" y1="222" x2="874.6666666666666" y2="251" stroke="#2e2e2e" stroke-width="0.9"/><line x1="879.5" y1="222" x2="879.5" y2="251" stroke="#2e2e2e" stroke-width="0.9"/><line x1="884.3333333333334" y1="222" x2="884.3333333333334" y2="251" stroke="#2e2e2e" stroke-width="0.9"/><line x1="889.1666666666666" y1="222" x2="889.1666666666666" y2="251" stroke="#2e2e2e" stroke-width="0.9"/><line x1="865" y1="226.83333333333334" x2="894" y2="226.83333333333334" stroke="#2e2e2e" stroke-width="0.9"/><line x1="865" y1="231.66666666666666" x2="894" y2="231.66666666666666" stroke="#2e2e2e" stroke-width="0.9"/><line x1="865" y1="236.5" x2="894" y2="236.5" stroke="#2e2e2e" stroke-width="0.9"/><line x1="865" y1="241.33333333333334" x2="894" y2="241.33333333333334" stroke="#2e2e2e" stroke-width="0.9"/><line x1="865" y1="246.16666666666666" x2="894" y2="246.16666666666666" stroke="#2e2e2e" stroke-width="0.9"/><rect x="876.5" y="235.0" width="6" height="2.2" fill="#5bbde0"/><rect x="876.5" y="239.5" width="6" height="2" fill="#d86fd0"/><rect x="1036" y="244" width="28" height="27" fill="#a0a0a0" stroke="#222" stroke-width="1.2"/><line x1="1041.6" y1="244" x2="1041.6" y2="271" stroke="#2e2e2e" stroke-width="0.9"/><line x1="1047.2" y1="244" x2="1047.2" y2="271" stroke="#2e2e2e" stroke-width="0.9"/><line x1="1052.8" y1="244" x2="1052.8" y2="271" stroke="#2e2e2e" stroke-width="0.9"/><line x1="1058.4" y1="244" x2="1058.4" y2="271" stroke="#2e2e2e" stroke-width="0.9"/><line x1="1036" y1="249.4" x2="1064" y2="249.4" stroke="#2e2e2e" stroke-width="0.9"/><line x1="1036" y1="254.8" x2="1064" y2="254.8" stroke="#2e2e2e" stroke-width="0.9"/><line x1="1036" y1="260.2" x2="1064" y2="260.2" stroke="#2e2e2e" stroke-width="0.9"/><line x1="1036" y1="265.6" x2="1064" y2="265.6" stroke="#2e2e2e" stroke-width="0.9"/><rect x="1047.0" y="256.0" width="6" height="2.2" fill="#5bbde0"/><rect x="1047.0" y="260.5" width="6" height="2" fill="#d86fd0"/><rect x="1130" y="220" width="26" height="26" fill="#a0a0a0" stroke="#222" stroke-width="1.2"/><line x1="1136.5" y1="220" x2="1136.5" y2="246" stroke="#2e2e2e" stroke-width="0.9"/><line x1="1143.0" y1="220" x2="1143.0" y2="246" stroke="#2e2e2e" stroke-width="0.9"/><line x1="1149.5" y1="220" x2="1149.5" y2="246" stroke="#2e2e2e" stroke-width="0.9"/><line x1="1130" y1="226.5" x2="1156" y2="226.5" stroke="#2e2e2e" stroke-width="0.9"/><line x1="1130" y1="233.0" x2="1156" y2="233.0" stroke="#2e2e2e" stroke-width="0.9"/><line x1="1130" y1="239.5" x2="1156" y2="239.5" stroke="#2e2e2e" stroke-width="0.9"/><rect x="1140.0" y="231.5" width="6" height="2.2" fill="#5bbde0"/><rect x="1140.0" y="236.0" width="6" height="2" fill="#d86fd0"/><rect x="1132" y="291" width="20" height="19" fill="#a0a0a0" stroke="#222" stroke-width="1.2"/><line x1="1137.0" y1="291" x2="1137.0" y2="310" stroke="#2e2e2e" stroke-width="0.9"/><line x1="1142.0" y1="291" x2="1142.0" y2="310" stroke="#2e2e2e" stroke-width="0.9"/><line x1="1147.0" y1="291" x2="1147.0" y2="310" stroke="#2e2e2e" stroke-width="0.9"/><line x1="1132" y1="295.75" x2="1152" y2="295.75" stroke="#2e2e2e" stroke-width="0.9"/><line x1="1132" y1="300.5" x2="1152" y2="300.5" stroke="#2e2e2e" stroke-width="0.9"/><line x1="1132" y1="305.25" x2="1152" y2="305.25" stroke="#2e2e2e" stroke-width="0.9"/><rect x="1139.0" y="299.0" width="6" height="2.2" fill="#5bbde0"/><rect x="1139.0" y="303.5" width="6" height="2" fill="#d86fd0"/><rect x="1132" y="323" width="20" height="19" fill="#a0a0a0" stroke="#222" stroke-width="1.2"/><line x1="1137.0" y1="323" x2="1137.0" y2="342" stroke="#2e2e2e" stroke-width="0.9"/><line x1="1142.0" y1="323" x2="1142.0" y2="342" stroke="#2e2e2e" stroke-width="0.9"/><line x1="1147.0" y1="323" x2="1147.0" y2="342" stroke="#2e2e2e" stroke-width="0.9"/><line x1="1132" y1="327.75" x2="1152" y2="327.75" stroke="#2e2e2e" stroke-width="0.9"/><line x1="1132" y1="332.5" x2="1152" y2="332.5" stroke="#2e2e2e" stroke-width="0.9"/><line x1="1132" y1="337.25" x2="1152" y2="337.25" stroke="#2e2e2e" stroke-width="0.9"/><rect x="1139.0" y="331.0" width="6" height="2.2" fill="#5bbde0"/><rect x="1139.0" y="335.5" width="6" height="2" fill="#d86fd0"/><rect x="1047" y="343" width="20" height="20" fill="#a0a0a0" stroke="#222" stroke-width="1.2"/><line x1="1052.0" y1="343" x2="1052.0" y2="363" stroke="#2e2e2e" stroke-width="0.9"/><line x1="1057.0" y1="343" x2="1057.0" y2="363" stroke="#2e2e2e" stroke-width="0.9"/><line x1="1062.0" y1="343" x2="1062.0" y2="363" stroke="#2e2e2e" stroke-width="0.9"/><line x1="1047" y1="348.0" x2="1067" y2="348.0" stroke="#2e2e2e" stroke-width="0.9"/><line x1="1047" y1="353.0" x2="1067" y2="353.0" stroke="#2e2e2e" stroke-width="0.9"/><line x1="1047" y1="358.0" x2="1067" y2="358.0" stroke="#2e2e2e" stroke-width="0.9"/><rect x="1054.0" y="351.5" width="6" height="2.2" fill="#5bbde0"/><rect x="1054.0" y="356.0" width="6" height="2" fill="#d86fd0"/><rect x="865" y="344" width="29" height="29" fill="#a0a0a0" stroke="#222" stroke-width="1.2"/><line x1="869.8333333333334" y1="344" x2="869.8333333333334" y2="373" stroke="#2e2e2e" stroke-width="0.9"/><line x1="874.6666666666666" y1="344" x2="874.6666666666666" y2="373" stroke="#2e2e2e" stroke-width="0.9"/><line x1="879.5" y1="344" x2="879.5" y2="373" stroke="#2e2e2e" stroke-width="0.9"/><line x1="884.3333333333334" y1="344" x2="884.3333333333334" y2="373" stroke="#2e2e2e" stroke-width="0.9"/><line x1="889.1666666666666" y1="344" x2="889.1666666666666" y2="373" stroke="#2e2e2e" stroke-width="0.9"/><line x1="865" y1="348.8333333333333" x2="894" y2="348.8333333333333" stroke="#2e2e2e" stroke-width="0.9"/><line x1="865" y1="353.6666666666667" x2="894" y2="353.6666666666667" stroke="#2e2e2e" stroke-width="0.9"/><line x1="865" y1="358.5" x2="894" y2="358.5" stroke="#2e2e2e" stroke-width="0.9"/><line x1="865" y1="363.3333333333333" x2="894" y2="363.3333333333333" stroke="#2e2e2e" stroke-width="0.9"/><line x1="865" y1="368.1666666666667" x2="894" y2="368.1666666666667" stroke="#2e2e2e" stroke-width="0.9"/><rect x="876.5" y="357.0" width="6" height="2.2" fill="#5bbde0"/><rect x="876.5" y="361.5" width="6" height="2" fill="#d86fd0"/><rect x="822" y="346" width="25" height="26" fill="#a0a0a0" stroke="#222" stroke-width="1.2"/><line x1="828.25" y1="346" x2="828.25" y2="372" stroke="#2e2e2e" stroke-width="0.9"/><line x1="834.5" y1="346" x2="834.5" y2="372" stroke="#2e2e2e" stroke-width="0.9"/><line x1="840.75" y1="346" x2="840.75" y2="372" stroke="#2e2e2e" stroke-width="0.9"/><line x1="822" y1="352.5" x2="847" y2="352.5" stroke="#2e2e2e" stroke-width="0.9"/><line x1="822" y1="359.0" x2="847" y2="359.0" stroke="#2e2e2e" stroke-width="0.9"/><line x1="822" y1="365.5" x2="847" y2="365.5" stroke="#2e2e2e" stroke-width="0.9"/><rect x="831.5" y="357.5" width="6" height="2.2" fill="#5bbde0"/><rect x="831.5" y="362.0" width="6" height="2" fill="#d86fd0"/><circle cx="834.5" cy="359.0" r="6.5" fill="none" stroke="#222" stroke-width="1.1"/><rect x="862" y="404" width="35" height="36" fill="#a0a0a0" stroke="#222" stroke-width="1.2"/><line x1="867.0" y1="404" x2="867.0" y2="440" stroke="#2e2e2e" stroke-width="0.9"/><line x1="872.0" y1="404" x2="872.0" y2="440" stroke="#2e2e2e" stroke-width="0.9"/><line x1="877.0" y1="404" x2="877.0" y2="440" stroke="#2e2e2e" stroke-width="0.9"/><line x1="882.0" y1="404" x2="882.0" y2="440" stroke="#2e2e2e" stroke-width="0.9"/><line x1="887.0" y1="404" x2="887.0" y2="440" stroke="#2e2e2e" stroke-width="0.9"/><line x1="892.0" y1="404" x2="892.0" y2="440" stroke="#2e2e2e" stroke-width="0.9"/><line x1="862" y1="409.14285714285717" x2="897" y2="409.14285714285717" stroke="#2e2e2e" stroke-width="0.9"/><line x1="862" y1="414.2857142857143" x2="897" y2="414.2857142857143" stroke="#2e2e2e" stroke-width="0.9"/><line x1="862" y1="419.42857142857144" x2="897" y2="419.42857142857144" stroke="#2e2e2e" stroke-width="0.9"/><line x1="862" y1="424.57142857142856" x2="897" y2="424.57142857142856" stroke="#2e2e2e" stroke-width="0.9"/><line x1="862" y1="429.7142857142857" x2="897" y2="429.7142857142857" stroke="#2e2e2e" stroke-width="0.9"/><line x1="862" y1="434.85714285714283" x2="897" y2="434.85714285714283" stroke="#2e2e2e" stroke-width="0.9"/><rect x="876.5" y="420.5" width="6" height="2.2" fill="#5bbde0"/><rect x="876.5" y="425.0" width="6" height="2" fill="#d86fd0"/><rect x="1047" y="418" width="20" height="20" fill="#a0a0a0" stroke="#222" stroke-width="1.2"/><line x1="1052.0" y1="418" x2="1052.0" y2="438" stroke="#2e2e2e" stroke-width="0.9"/><line x1="1057.0" y1="418" x2="1057.0" y2="438" stroke="#2e2e2e" stroke-width="0.9"/><line x1="1062.0" y1="418" x2="1062.0" y2="438" stroke="#2e2e2e" stroke-width="0.9"/><line x1="1047" y1="423.0" x2="1067" y2="423.0" stroke="#2e2e2e" stroke-width="0.9"/><line x1="1047" y1="428.0" x2="1067" y2="428.0" stroke="#2e2e2e" stroke-width="0.9"/><line x1="1047" y1="433.0" x2="1067" y2="433.0" stroke="#2e2e2e" stroke-width="0.9"/><rect x="1054.0" y="426.5" width="6" height="2.2" fill="#5bbde0"/><rect x="1054.0" y="431.0" width="6" height="2" fill="#d86fd0"/><rect x="1132" y="440" width="20" height="18" fill="#a0a0a0" stroke="#222" stroke-width="1.2"/><line x1="1137.0" y1="440" x2="1137.0" y2="458" stroke="#2e2e2e" stroke-width="0.9"/><line x1="1142.0" y1="440" x2="1142.0" y2="458" stroke="#2e2e2e" stroke-width="0.9"/><line x1="1147.0" y1="440" x2="1147.0" y2="458" stroke="#2e2e2e" stroke-width="0.9"/><line x1="1132" y1="444.5" x2="1152" y2="444.5" stroke="#2e2e2e" stroke-width="0.9"/><line x1="1132" y1="449.0" x2="1152" y2="449.0" stroke="#2e2e2e" stroke-width="0.9"/><line x1="1132" y1="453.5" x2="1152" y2="453.5" stroke="#2e2e2e" stroke-width="0.9"/><rect x="1139.0" y="447.5" width="6" height="2.2" fill="#5bbde0"/><rect x="1139.0" y="452.0" width="6" height="2" fill="#d86fd0"/><rect x="1137" y="470" width="20" height="20" fill="#a0a0a0" stroke="#222" stroke-width="1.2"/><line x1="1142.0" y1="470" x2="1142.0" y2="490" stroke="#2e2e2e" stroke-width="0.9"/><line x1="1147.0" y1="470" x2="1147.0" y2="490" stroke="#2e2e2e" stroke-width="0.9"/><line x1="1152.0" y1="470" x2="1152.0" y2="490" stroke="#2e2e2e" stroke-width="0.9"/><line x1="1137" y1="475.0" x2="1157" y2="475.0" stroke="#2e2e2e" stroke-width="0.9"/><line x1="1137" y1="480.0" x2="1157" y2="480.0" stroke="#2e2e2e" stroke-width="0.9"/><line x1="1137" y1="485.0" x2="1157" y2="485.0" stroke="#2e2e2e" stroke-width="0.9"/><rect x="1144.0" y="478.5" width="6" height="2.2" fill="#5bbde0"/><rect x="1144.0" y="483.0" width="6" height="2" fill="#d86fd0"/><rect x="1028" y="507" width="27" height="28" fill="#a0a0a0" stroke="#222" stroke-width="1.2"/><line x1="1033.4" y1="507" x2="1033.4" y2="535" stroke="#2e2e2e" stroke-width="0.9"/><line x1="1038.8" y1="507" x2="1038.8" y2="535" stroke="#2e2e2e" stroke-width="0.9"/><line x1="1044.2" y1="507" x2="1044.2" y2="535" stroke="#2e2e2e" stroke-width="0.9"/><line x1="1049.6" y1="507" x2="1049.6" y2="535" stroke="#2e2e2e" stroke-width="0.9"/><line x1="1028" y1="512.6" x2="1055" y2="512.6" stroke="#2e2e2e" stroke-width="0.9"/><line x1="1028" y1="518.2" x2="1055" y2="518.2" stroke="#2e2e2e" stroke-width="0.9"/><line x1="1028" y1="523.8" x2="1055" y2="523.8" stroke="#2e2e2e" stroke-width="0.9"/><line x1="1028" y1="529.4" x2="1055" y2="529.4" stroke="#2e2e2e" stroke-width="0.9"/><rect x="1038.5" y="519.5" width="6" height="2.2" fill="#5bbde0"/><rect x="1038.5" y="524.0" width="6" height="2" fill="#d86fd0"/><rect x="862" y="527" width="35" height="36" fill="#a0a0a0" stroke="#222" stroke-width="1.2"/><line x1="867.0" y1="527" x2="867.0" y2="563" stroke="#2e2e2e" stroke-width="0.9"/><line x1="872.0" y1="527" x2="872.0" y2="563" stroke="#2e2e2e" stroke-width="0.9"/><line x1="877.0" y1="527" x2="877.0" y2="563" stroke="#2e2e2e" stroke-width="0.9"/><line x1="882.0" y1="527" x2="882.0" y2="563" stroke="#2e2e2e" stroke-width="0.9"/><line x1="887.0" y1="527" x2="887.0" y2="563" stroke="#2e2e2e" stroke-width="0.9"/><line x1="892.0" y1="527" x2="892.0" y2="563" stroke="#2e2e2e" stroke-width="0.9"/><line x1="862" y1="532.1428571428571" x2="897" y2="532.1428571428571" stroke="#2e2e2e" stroke-width="0.9"/><line x1="862" y1="537.2857142857143" x2="897" y2="537.2857142857143" stroke="#2e2e2e" stroke-width="0.9"/><line x1="862" y1="542.4285714285714" x2="897" y2="542.4285714285714" stroke="#2e2e2e" stroke-width="0.9"/><line x1="862" y1="547.5714285714286" x2="897" y2="547.5714285714286" stroke="#2e2e2e" stroke-width="0.9"/><line x1="862" y1="552.7142857142857" x2="897" y2="552.7142857142857" stroke="#2e2e2e" stroke-width="0.9"/><line x1="862" y1="557.8571428571429" x2="897" y2="557.8571428571429" stroke="#2e2e2e" stroke-width="0.9"/><rect x="876.5" y="543.5" width="6" height="2.2" fill="#5bbde0"/><rect x="876.5" y="548.0" width="6" height="2" fill="#d86fd0"/><rect x="1128" y="524" width="28" height="28" fill="#a0a0a0" stroke="#222" stroke-width="1.2"/><line x1="1133.6" y1="524" x2="1133.6" y2="552" stroke="#2e2e2e" stroke-width="0.9"/><line x1="1139.2" y1="524" x2="1139.2" y2="552" stroke="#2e2e2e" stroke-width="0.9"/><line x1="1144.8" y1="524" x2="1144.8" y2="552" stroke="#2e2e2e" stroke-width="0.9"/><line x1="1150.4" y1="524" x2="1150.4" y2="552" stroke="#2e2e2e" stroke-width="0.9"/><line x1="1128" y1="529.6" x2="1156" y2="529.6" stroke="#2e2e2e" stroke-width="0.9"/><line x1="1128" y1="535.2" x2="1156" y2="535.2" stroke="#2e2e2e" stroke-width="0.9"/><line x1="1128" y1="540.8" x2="1156" y2="540.8" stroke="#2e2e2e" stroke-width="0.9"/><line x1="1128" y1="546.4" x2="1156" y2="546.4" stroke="#2e2e2e" stroke-width="0.9"/><rect x="1139.0" y="536.5" width="6" height="2.2" fill="#5bbde0"/><rect x="1139.0" y="541.0" width="6" height="2" fill="#d86fd0"/><rect x="1168" y="592" width="20" height="19" fill="#a0a0a0" stroke="#222" stroke-width="1.2"/><line x1="1173.0" y1="592" x2="1173.0" y2="611" stroke="#2e2e2e" stroke-width="0.9"/><line x1="1178.0" y1="592" x2="1178.0" y2="611" stroke="#2e2e2e" stroke-width="0.9"/><line x1="1183.0" y1="592" x2="1183.0" y2="611" stroke="#2e2e2e" stroke-width="0.9"/><line x1="1168" y1="596.75" x2="1188" y2="596.75" stroke="#2e2e2e" stroke-width="0.9"/><line x1="1168" y1="601.5" x2="1188" y2="601.5" stroke="#2e2e2e" stroke-width="0.9"/><line x1="1168" y1="606.25" x2="1188" y2="606.25" stroke="#2e2e2e" stroke-width="0.9"/><rect x="1175.0" y="600.0" width="6" height="2.2" fill="#5bbde0"/><rect x="1175.0" y="604.5" width="6" height="2" fill="#d86fd0"/><line x1="857.7" y1="172" x2="876.5" y2="193" stroke="#ddd33a" stroke-width="1"/><g fill="none" stroke="#ddd33a" stroke-width="0.9" opacity="0.9"><circle cx="878.0" cy="192" r="2.6"/><circle cx="874.5" cy="195" r="2"/><path d="M872.5 190 L880.5 197 M880.5 188 L875.5 198 M873.5 198 L879.5 194"/></g><line x1="970.5" y1="169" x2="978.8" y2="195" stroke="#ddd33a" stroke-width="1"/><g fill="none" stroke="#ddd33a" stroke-width="0.9" opacity="0.9"><circle cx="980.3" cy="194" r="2.6"/><circle cx="976.8" cy="197" r="2"/><path d="M974.8 192 L982.8 199 M982.8 190 L977.8 200 M975.8 200 L981.8 196"/></g><line x1="1075" y1="167" x2="1096" y2="189" stroke="#ddd33a" stroke-width="1"/><g fill="none" stroke="#ddd33a" stroke-width="0.9" opacity="0.9"><circle cx="1097.5" cy="188" r="2.6"/><circle cx="1094" cy="191" r="2"/><path d="M1092 186 L1100 193 M1100 184 L1095 194 M1093 194 L1099 190"/></g><line x1="1175" y1="170" x2="1152" y2="191" stroke="#ddd33a" stroke-width="1"/><g fill="none" stroke="#ddd33a" stroke-width="0.9" opacity="0.9"><circle cx="1153.5" cy="190" r="2.6"/><circle cx="1150" cy="193" r="2"/><path d="M1148 188 L1156 195 M1156 186 L1151 196 M1149 196 L1155 192"/></g><line x1="895" y1="221.5" x2="905.7" y2="209.8" stroke="#ddd33a" stroke-width="1"/><g fill="none" stroke="#ddd33a" stroke-width="0.9" opacity="0.9"><circle cx="907.2" cy="208.8" r="2.6"/><circle cx="903.7" cy="211.8" r="2"/><path d="M901.7 206.8 L909.7 213.8 M909.7 204.8 L904.7 214.8 M902.7 214.8 L908.7 210.8"/></g><line x1="1152" y1="320" x2="1167" y2="306" stroke="#ddd33a" stroke-width="1"/><g fill="none" stroke="#ddd33a" stroke-width="0.9" opacity="0.9"><circle cx="1168.5" cy="305" r="2.6"/><circle cx="1165" cy="308" r="2"/><path d="M1163 303 L1171 310 M1171 301 L1166 311 M1164 311 L1170 307"/></g><line x1="1066.5" y1="343.4" x2="1081" y2="326.7" stroke="#ddd33a" stroke-width="1"/><g fill="none" stroke="#ddd33a" stroke-width="0.9" opacity="0.9"><circle cx="1082.5" cy="325.7" r="2.6"/><circle cx="1079" cy="328.7" r="2"/><path d="M1077 323.7 L1085 330.7 M1085 321.7 L1080 331.7 M1078 331.7 L1084 327.7"/></g><line x1="847.3" y1="345.5" x2="859.8" y2="333" stroke="#ddd33a" stroke-width="1"/><g fill="none" stroke="#ddd33a" stroke-width="0.9" opacity="0.9"><circle cx="861.3" cy="332" r="2.6"/><circle cx="857.8" cy="335" r="2"/><path d="M855.8 330 L863.8 337 M863.8 328 L858.8 338 M856.8 338 L862.8 334"/></g><line x1="862" y1="411.8" x2="852.7" y2="399" stroke="#ddd33a" stroke-width="1"/><g fill="none" stroke="#ddd33a" stroke-width="0.9" opacity="0.9"><circle cx="854.2" cy="398" r="2.6"/><circle cx="850.7" cy="401" r="2"/><path d="M848.7 396 L856.7 403 M856.7 394 L851.7 404 M849.7 404 L855.7 400"/></g><line x1="1066.5" y1="419.3" x2="1083.2" y2="403.4" stroke="#ddd33a" stroke-width="1"/><g fill="none" stroke="#ddd33a" stroke-width="0.9" opacity="0.9"><circle cx="1084.7" cy="402.4" r="2.6"/><circle cx="1081.2" cy="405.4" r="2"/><path d="M1079.2 400.4 L1087.2 407.4 M1087.2 398.4 L1082.2 408.4 M1080.2 408.4 L1086.2 404.4"/></g><line x1="1153" y1="445" x2="1166.7" y2="424.3" stroke="#ddd33a" stroke-width="1"/><g fill="none" stroke="#ddd33a" stroke-width="0.9" opacity="0.9"><circle cx="1168.2" cy="423.3" r="2.6"/><circle cx="1164.7" cy="426.3" r="2"/><path d="M1162.7 421.3 L1170.7 428.3 M1170.7 419.3 L1165.7 429.3 M1163.7 429.3 L1169.7 425.3"/></g><line x1="1156.3" y1="470.2" x2="1173" y2="455.6" stroke="#ddd33a" stroke-width="1"/><g fill="none" stroke="#ddd33a" stroke-width="0.9" opacity="0.9"><circle cx="1174.5" cy="454.6" r="2.6"/><circle cx="1171" cy="457.6" r="2"/><path d="M1169 452.6 L1177 459.6 M1177 450.6 L1172 460.6 M1170 460.6 L1176 456.6"/></g><line x1="1156.3" y1="526.6" x2="1168.8" y2="514" stroke="#ddd33a" stroke-width="1"/><g fill="none" stroke="#ddd33a" stroke-width="0.9" opacity="0.9"><circle cx="1170.3" cy="513" r="2.6"/><circle cx="1166.8" cy="516" r="2"/><path d="M1164.8 511 L1172.8 518 M1172.8 509 L1167.8 519 M1165.8 519 L1171.8 515"/></g><line x1="949.6" y1="607.2" x2="970.5" y2="585" stroke="#ddd33a" stroke-width="1"/><g fill="none" stroke="#ddd33a" stroke-width="0.9" opacity="0.9"><circle cx="972.0" cy="584" r="2.6"/><circle cx="968.5" cy="587" r="2"/><path d="M966.5 582 L974.5 589 M974.5 580 L969.5 590 M967.5 590 L973.5 586"/></g><line x1="1065.7" y1="607.2" x2="1074.9" y2="576.7" stroke="#ddd33a" stroke-width="1"/><g fill="none" stroke="#ddd33a" stroke-width="0.9" opacity="0.9"><circle cx="1076.4" cy="575.7" r="2.6"/><circle cx="1072.9" cy="578.7" r="2"/><path d="M1070.9 573.7 L1078.9 580.7 M1078.9 571.7 L1073.9 581.7 M1071.9 581.7 L1077.9 577.7"/></g><line x1="1168.8" y1="595.5" x2="1152" y2="580.9" stroke="#ddd33a" stroke-width="1"/><g fill="none" stroke="#ddd33a" stroke-width="0.9" opacity="0.9"><circle cx="1153.5" cy="579.9" r="2.6"/><circle cx="1150" cy="582.9" r="2"/><path d="M1148 577.9 L1156 584.9 M1156 575.9 L1151 585.9 M1149 585.9 L1155 581.9"/></g><rect x="967.5" y="154.5" width="3" height="3" fill="#ddd33a" opacity="0.8"/><rect x="1005.5" y="147.5" width="3" height="3" fill="#ddd33a" opacity="0.8"/><rect x="1029.5" y="303.5" width="3" height="3" fill="#ddd33a" opacity="0.8"/><rect x="1019.5" y="326.5" width="3" height="3" fill="#ddd33a" opacity="0.8"/><rect x="840.5" y="368.5" width="3" height="3" fill="#ddd33a" opacity="0.8"/><rect x="854.5" y="395.5" width="3" height="3" fill="#ddd33a" opacity="0.8"/><rect x="942.5" y="464.5" width="3" height="3" fill="#ddd33a" opacity="0.8"/><rect x="1001.5" y="461.5" width="3" height="3" fill="#ddd33a" opacity="0.8"/><rect x="973.5" y="530.5" width="3" height="3" fill="#ddd33a" opacity="0.8"/><rect x="850.5" y="455.5" width="3" height="3" fill="#ddd33a" opacity="0.8"/><rect x="868.5" y="378.5" width="3" height="3" fill="#ddd33a" opacity="0.8"/><rect x="834.5" y="441.5" width="3" height="3" fill="#ddd33a" opacity="0.8"/><path d="M965 256 H971 M968 253.5 V258.5" stroke="#ddd33a" stroke-width="1.6"/><path d="M963 322 H969 M966 319.5 V324.5" stroke="#ddd33a" stroke-width="1.6"/><path d="M1011 296 H1017 M1014 293.5 V298.5" stroke="#ddd33a" stroke-width="1.6"/><path d="M953 287 H959 M956 284.5 V289.5" stroke="#ddd33a" stroke-width="1.6"/><path d="M1003 319 H1009 M1006 316.5 V321.5" stroke="#ddd33a" stroke-width="1.6"/><path d="M978 350 H984 M981 347.5 V352.5" stroke="#ddd33a" stroke-width="1.6"/><path d="M1002 378 H1008 M1005 375.5 V380.5" stroke="#ddd33a" stroke-width="1.6"/><path d="M955 399 H961 M958 396.5 V401.5" stroke="#ddd33a" stroke-width="1.6"/><path d="M1000 429 H1006 M1003 426.5 V431.5" stroke="#ddd33a" stroke-width="1.6"/><path d="M959 444 H965 M962 441.5 V446.5" stroke="#ddd33a" stroke-width="1.6"/><path d="M982 458 H988 M985 455.5 V460.5" stroke="#ddd33a" stroke-width="1.6"/><path d="M1000 485 H1006 M1003 482.5 V487.5" stroke="#ddd33a" stroke-width="1.6"/><path d="M970 504 H976 M973 501.5 V506.5" stroke="#ddd33a" stroke-width="1.6"/><path d="M990 516 H996 M993 513.5 V518.5" stroke="#ddd33a" stroke-width="1.6"/><path d="M964 527 H970 M967 524.5 V529.5" stroke="#ddd33a" stroke-width="1.6"/><line x1="949" y1="403" x2="962" y2="403" stroke="#ddd33a" stroke-width="1.5"/><line x1="904" y1="458.5" x2="933" y2="458.5" stroke="#ddd33a" stroke-width="2" stroke-dasharray="1.2 0.8 2 1 0.8 1.5" opacity="0.8"/><line x1="904" y1="463" x2="928" y2="463" stroke="#ddd33a" stroke-width="2" stroke-dasharray="1.2 0.8 2 1 0.8 1.5" opacity="0.8"/><line x1="904" y1="467.5" x2="924" y2="467.5" stroke="#ddd33a" stroke-width="2" stroke-dasharray="1.2 0.8 2 1 0.8 1.5" opacity="0.8"/><line x1="904" y1="472" x2="926" y2="472" stroke="#ddd33a" stroke-width="2" stroke-dasharray="1.2 0.8 2 1 0.8 1.5" opacity="0.8"/><line x1="933" y1="460" x2="949" y2="467" stroke="#ddd33a" stroke-width="0.8"/><line x1="1033" y1="446" x2="1125" y2="446" stroke="#ddd33a" stroke-width="2" stroke-dasharray="1.2 0.8 2 1 0.8 1.5" opacity="0.8"/><line x1="1033" y1="450.5" x2="1123" y2="450.5" stroke="#ddd33a" stroke-width="2" stroke-dasharray="1.2 0.8 2 1 0.8 1.5" opacity="0.8"/><line x1="1033" y1="455" x2="1091" y2="455" stroke="#ddd33a" stroke-width="2" stroke-dasharray="1.2 0.8 2 1 0.8 1.5" opacity="0.8"/><line x1="1122" y1="446" x2="1128" y2="438" stroke="#ddd33a" stroke-width="0.8"/><rect x="883" y="253" width="9" height="2" fill="#ddd33a" opacity="0.55"/><rect x="1057" y="273" width="9" height="2" fill="#ddd33a" opacity="0.55"/><rect x="1131" y="217" width="9" height="2" fill="#ddd33a" opacity="0.55"/><rect x="1131" y="288" width="9" height="2" fill="#ddd33a" opacity="0.55"/><rect x="1131" y="319" width="9" height="2" fill="#ddd33a" opacity="0.55"/><rect x="1046" y="340" width="9" height="2" fill="#ddd33a" opacity="0.55"/><rect x="883" y="375" width="9" height="2" fill="#ddd33a" opacity="0.55"/><rect x="831" y="374" width="9" height="2" fill="#ddd33a" opacity="0.55"/><rect x="883" y="442" width="9" height="2" fill="#ddd33a" opacity="0.55"/><rect x="1046" y="415" width="9" height="2" fill="#ddd33a" opacity="0.55"/><rect x="1131" y="436" width="9" height="2" fill="#ddd33a" opacity="0.55"/><rect x="1134" y="467" width="9" height="2" fill="#ddd33a" opacity="0.55"/><rect x="1047" y="537" width="9" height="2" fill="#ddd33a" opacity="0.55"/><rect x="883" y="565" width="9" height="2" fill="#ddd33a" opacity="0.55"/><rect x="1127" y="521" width="9" height="2" fill="#ddd33a" opacity="0.55"/><rect x="1167" y="589" width="9" height="2" fill="#ddd33a" opacity="0.55"/></svg>
<div class="a" style="left:997px;top:99px;width:35px;height:16px;background:#e9eef6"></div>
<div class="t" style="left:1002.50px;top:104.00px;font-size:8.4px;font-family:'Liberation Sans',sans-serif;font-weight:normal;font-style:normal;color:#3c4452;transform:scaleX(1.0105);">Plan:2</div>
<div class="a" style="left:1256px;top:104px;width:7px;height:6px;border:1.5px solid #3b4d66;background:#f4f6f9"></div>
<svg style="left:1266px;top:103px;" width="8" height="8" viewBox="0 0 8 8"><path d="M1 1 L7 7 M7 1 L1 7" stroke="#3b4d66" stroke-width="2"/></svg>
<svg style="left:754px;top:642px;" width="14" height="14" viewBox="0 0 14 14"><circle cx="7" cy="7" r="6.5" fill="#f6f6f6"/><circle cx="7" cy="7" r="4.6" fill="none" stroke="#888" stroke-width="1" stroke-dasharray="1.2 1.6"/><rect x="5.3" y="5.3" width="3.4" height="3.4" fill="#e0664f"/></svg>
<svg style="left:975px;top:65px;" width="10" height="14" viewBox="0 0 10 14"><path d="M0.5 0.5 V11 L3 8.5 L5 13 L7 12 L5 7.5 H8.5Z" fill="#fff" stroke="#111" stroke-width="0.9"/></svg>
<div class="a" style="left:0px;top:660px;width:1279px;height:20px;background:#e7eefa"></div>
<div class="a" style="left:0px;top:660px;width:281px;height:19px;background:#fff;border:1px solid #c9d1dc;border-left:none"></div>
<div class="a" style="left:4px;top:663px;width:1px;height:13px;background:#bbb"></div>
<div class="t" style="left:8.70px;top:666.00px;font-size:8.3px;font-family:'Liberation Sans',sans-serif;font-weight:bold;font-style:normal;color:#111;transform:scaleX(0.9688);">Click left to select, Ctrl+click to add, Shift+click to select entity group</div>
<div class="a" style="left:0px;top:679px;width:1279px;height:14px;background:linear-gradient(#fdfdfd 0%,#fbfbfb 60%,#eeeeee 100%);border-top:1px solid #c7ced8"></div>
<div class="t" style="left:42.00px;top:684.00px;font-size:8.6px;font-family:'Liberation Sans',sans-serif;font-weight:normal;font-style:normal;color:#7a7a7a;transform:scaleX(0.9958);">et Help.</div>
<div class="t" style="left:667.00px;top:685.00px;font-size:8.4px;font-family:'Liberation Sans',sans-serif;font-weight:normal;font-style:normal;color:#6f6f6f;transform:scaleX(0.9477);">Country:</div>
<div class="t" style="left:703.00px;top:685.00px;font-size:8.4px;font-family:'Liberation Sans',sans-serif;font-weight:normal;font-style:normal;color:#333;transform:scaleX(0.8123);">USA</div>
<div class="t" style="left:801.60px;top:685.00px;font-size:8.4px;font-family:'Liberation Sans',sans-serif;font-weight:normal;font-style:normal;color:#6f6f6f;transform:scaleX(0.9277);">Drawing type:</div>
<div class="t" style="left:855.30px;top:685.00px;font-size:8.4px;font-family:'Liberation Sans',sans-serif;font-weight:normal;font-style:normal;color:#222;transform:scaleX(0.9521);">Reinforcement drawing</div>
<div class="t" style="left:1014.60px;top:685.00px;font-size:8.4px;font-family:'Liberation Sans',sans-serif;font-weight:normal;font-style:normal;color:#6f6f6f;transform:scaleX(0.8247);">Scale:</div>
<div class="t" style="left:1040.30px;top:685.00px;font-size:8.4px;font-family:'Liberation Sans',sans-serif;font-weight:normal;font-style:normal;color:#222;transform:scaleX(0.9573);">1/8&quot;</div>
<div class="t" style="left:1058.70px;top:685.00px;font-size:8.4px;font-family:'Liberation Sans',sans-serif;font-weight:normal;font-style:normal;color:#222;transform:scaleX(0.7863);">SCALE</div>
<div class="t" style="left:1085.40px;top:685.00px;font-size:8.4px;font-family:'Liberation Sans',sans-serif;font-weight:normal;font-style:normal;color:#6f6f6f;transform:scaleX(0.9158);">Length:</div>
<div class="t" style="left:1117.30px;top:685.00px;font-size:8.4px;font-family:'Liberation Sans',sans-serif;font-weight:normal;font-style:normal;color:#222;transform:scaleX(0.9290);">inches</div>
<div class="t" style="left:1151.00px;top:685.00px;font-size:8.4px;font-family:'Liberation Sans',sans-serif;font-weight:normal;font-style:normal;color:#6f6f6f;transform:scaleX(0.8926);">Angle:</div>
<div class="t" style="left:1178.20px;top:685.00px;font-size:8.4px;font-family:'Liberation Sans',sans-serif;font-weight:normal;font-style:normal;color:#222;transform:scaleX(0.8489);">0.000</div>
<div class="t" style="left:1209.80px;top:685.00px;font-size:8.4px;font-family:'Liberation Sans',sans-serif;font-weight:normal;font-style:normal;color:#222;transform:scaleX(0.9654);">deg</div>
<div class="a" style="left:665px;top:681px;width:1px;height:11px;background:#dcdcdc"></div>
<div class="a" style="left:798px;top:681px;width:1px;height:11px;background:#dcdcdc"></div>
<div class="a" style="left:1012px;top:681px;width:1px;height:11px;background:#dcdcdc"></div>
<div class="a" style="left:1082px;top:681px;width:1px;height:11px;background:#dcdcdc"></div>
<div class="a" style="left:1148px;top:681px;width:1px;height:11px;background:#dcdcdc"></div>
<div class="a" style="left:1207px;top:681px;width:1px;height:11px;background:#dcdcdc"></div>
<div class="a" style="left:0px;top:669px;width:46px;height:22px;background:#f1f1f1;border:1px solid #dedede;box-shadow:1px 1px 1px rgba(0,0,0,0.12)"></div>
<div class="t" style="left:6.00px;top:677.00px;font-size:8.6px;font-family:'Liberation Sans',sans-serif;font-weight:normal;font-style:normal;color:#5a606c;transform:scaleX(0.8794);">Play Video</div>
<div class="a" style="left:0px;top:693px;width:1279px;height:27px;background:#1d1d1d"></div>
<svg style="left:6.0px;top:697.0px" width="18" height="18" viewBox="0 0 18 18"><path d="M5 17 C3 13 2 10 4 9 L5 9 V3 C5 1.5 7 1.5 7 3 V8 L8 7.5 C9 7 10 7.5 10 8 C11 7.5 12 8 12 8.5 C13 8 14 8.5 14 9.5 V13 C14 15 13 17 12 17Z" fill="#fff" stroke="#444" stroke-width="0.6"/></svg>
<svg style="left:38.0px;top:697.0px" width="18" height="18" viewBox="0 0 18 18"><circle cx="10.5" cy="7.5" r="4" fill="none" stroke="#e8e8e8" stroke-width="1.4"/><path d="M7.5 10.5 L4 14" stroke="#e8e8e8" stroke-width="1.6"/></svg>
<svg style="left:71.0px;top:697.0px" width="18" height="18" viewBox="0 0 18 18"><circle cx="9" cy="9" r="5" fill="none" stroke="#f0f0f0" stroke-width="1.8"/></svg>
<svg style="left:103.0px;top:697.0px" width="18" height="18" viewBox="0 0 18 18"><rect x="5" y="5" width="8" height="8" fill="none" stroke="#ddd" stroke-width="1.2"/><path d="M3 4 H15 M3 14 H15 M15 6 V12" stroke="#ddd" stroke-width="1.2"/></svg>
<svg style="left:137.0px;top:697.0px" width="18" height="18" viewBox="0 0 18 18"><path d="M15 11 H5 C5 14 8 15.5 11 15 C12.5 14.8 14 14 15 13.5 V16 C13 17 11 17.3 9 17 C4 16 2 12 2.5 8.5 C3 4 7 1.5 10.5 2 C14 2.5 16 5 15.5 9 Z M5.5 8.5 H12.5 C12.3 6 10.5 5 9 5 C7 5 5.8 6.5 5.5 8.5Z" fill="#1f8ce8"/></svg>
<svg style="left:169.0px;top:697.0px" width="18" height="18" viewBox="0 0 18 18"><path d="M2 5 H7 L8.5 6.5 H16 V15 H2Z" fill="#e8b13a"/><rect x="2" y="8" width="14" height="7" fill="#f6cf57"/><rect x="5" y="11" width="8" height="2" fill="#2d86d6"/></svg>
<svg style="left:202.0px;top:697.0px" width="18" height="18" viewBox="0 0 18 18"><path d="M6 5 C6 2 12 2 12 5" fill="none" stroke="#ddd" stroke-width="1.2"/><rect x="2" y="5" width="14" height="12" fill="#f2f2f2"/><rect x="6" y="8" width="2.8" height="2.8" fill="#f25022"/><rect x="9.2" y="8" width="2.8" height="2.8" fill="#7fba00"/><rect x="6" y="11.2" width="2.8" height="2.8" fill="#00a4ef"/><rect x="9.2" y="11.2" width="2.8" height="2.8" fill="#ffb900"/></svg>
<svg style="left:234.0px;top:697.0px" width="18" height="18" viewBox="0 0 18 18"><rect x="7" y="3" width="10" height="12" fill="#28a8ea"/><rect x="1.5" y="5" width="10" height="9" rx="1" fill="#0f6cbd"/><circle cx="6.5" cy="9.5" r="2.5" fill="none" stroke="#fff" stroke-width="1.3"/></svg>
<svg style="left:267.0px;top:697.0px" width="18" height="18" viewBox="0 0 18 18"><rect x="1.5" y="1.5" width="15" height="15" rx="2" fill="#ee5a32"/><path d="M12.5 5 C11 3.8 6 3.8 6 6.5 C6 9 12 8.5 12 11.5 C12 14 7 14 5.5 12.8" fill="none" stroke="#fff" stroke-width="2"/></svg>
<svg style="left:300.0px;top:697.0px" width="18" height="18" viewBox="0 0 18 18"><circle cx="9" cy="9" r="7.5" fill="#1ea1e3"/><path d="M11.5 6 C10 5 6.5 5 6.5 7 C6.5 9 11.5 8.5 11.5 11 C11.5 13 7.5 13 6 12" fill="none" stroke="#fff" stroke-width="1.6"/></svg>
<svg style="left:332.0px;top:697.0px" width="18" height="18" viewBox="0 0 18 18"><path d="M14 11 H5 C5 14 10 15 14 13 V15.5 C9 18 2.5 15 2.5 9 C2.5 3 9 1 13 3.5 C16 5.5 15 9 14 11Z M5.3 8.5 H11 C11 6 6 5.5 5.3 8.5Z" fill="#3ba5ed"/><circle cx="14" cy="4" r="2" fill="#3ba5ed"/></svg>
<svg style="left:365.0px;top:697.0px" width="18" height="18" viewBox="0 0 18 18"><path d="M12 2 L16 4 V14 L12 16 L5 10 L2.5 12 L1.5 11.5 V6.5 L2.5 6 L5 8 Z M12 6 L8 9 L12 12Z" fill="#8661c5"/></svg>
<svg style="left:397.0px;top:697.0px" width="18" height="18" viewBox="0 0 18 18"><rect x="2" y="4" width="14" height="11" fill="#2b88d8"/><path d="M2 4 L9 10 L16 4" fill="#64b5f6" stroke="#fff" stroke-width="0.8"/></svg>
<svg style="left:429.0px;top:697.0px" width="18" height="18" viewBox="0 0 18 18"><rect x="6" y="3" width="11" height="12" fill="#21a366"/><rect x="1.5" y="4.5" width="9" height="9" rx="1" fill="#107c41"/><path d="M4 7 L8 11 M8 7 L4 11" stroke="#fff" stroke-width="1.3"/></svg>
<svg style="left:462.0px;top:697.0px" width="18" height="18" viewBox="0 0 18 18"><circle cx="13" cy="5" r="2.5" fill="#7b83eb"/><rect x="8" y="7" width="9" height="8" rx="2" fill="#7b83eb"/><rect x="1.5" y="4.5" width="10" height="10" rx="1" fill="#4b53bc"/><path d="M4 7.5 H9 M6.5 7.5 V12.5" stroke="#fff" stroke-width="1.4"/></svg>
<svg style="left:495.0px;top:697.0px" width="18" height="18" viewBox="0 0 18 18"><rect x="1.5" y="1.5" width="15" height="15" rx="2" fill="#5eb130"/><path d="M12.5 5 H6 V13 H12.5" fill="none" stroke="#fff" stroke-width="2.4"/></svg>
<svg style="left:528.0px;top:697.0px" width="18" height="18" viewBox="0 0 18 18"><circle cx="9" cy="9" r="7.5" fill="#db4437"/><path d="M9 9 L15.5 5.2 A7.5 7.5 0 0 1 9 16.5Z" fill="#f4c20d"/><path d="M9 9 L9 16.5 A7.5 7.5 0 0 1 2.5 5.2Z" fill="#0f9d58"/><circle cx="9" cy="9" r="3.4" fill="#fff"/><circle cx="9" cy="9" r="2.6" fill="#4285f4"/></svg>
<svg style="left:560.0px;top:697.0px" width="18" height="18" viewBox="0 0 18 18"><rect x="6" y="3" width="11" height="12" fill="#41a5ee"/><rect x="1.5" y="4.5" width="9" height="9" rx="1" fill="#185abd"/><path d="M3 7 L4.5 12 L6 8.5 L7.5 12 L9 7" fill="none" stroke="#fff" stroke-width="1"/></svg>
<div class="a" style="left:585px;top:693px;width:34px;height:27px;background:#3a3a3a"></div>
<div class="a" style="left:586px;top:718px;width:33px;height:2px;background:#76b9ed"></div>
<svg style="left:593.0px;top:697.0px" width="18" height="18" viewBox="0 0 18 18"><rect x="1.5" y="1.5" width="15" height="15" fill="#000" stroke="#ddd" stroke-width="1"/><path d="M5.5 13.5 L9 4.5 L12.5 13.5" fill="none" stroke="#fff" stroke-width="1.6"/></svg>
<svg style="left:625.0px;top:697.0px" width="18" height="18" viewBox="0 0 18 18"><rect x="1.5" y="1.5" width="15" height="15" rx="2" fill="#f06a35"/><path d="M12.5 5 H6 V13 H12.5" fill="none" stroke="#fff" stroke-width="2.4"/></svg>
<div class="a" style="left:492px;top:718px;width:26px;height:2px;background:#76b9ed"></div>
<div class="a" style="left:623px;top:718px;width:25px;height:2px;background:#76b9ed"></div>
<div class="a" style="left:1238px;top:678px;width:26px;height:26px;background:linear-gradient(#ffffff 0%,#ffffff 58%,#b9b9b9 58%,#b9b9b9 100%);opacity:0.95"></div>
<svg style="left:1243px;top:682px;" width="16" height="20" viewBox="0 0 16 20"><path d="M2 18 L8 2 L14 18" fill="none" stroke="#1a1a1a" stroke-width="2.4"/></svg>
<div class="t" style="left:1244.00px;top:697.00px;font-size:8.5px;font-family:'Liberation Sans',sans-serif;font-weight:normal;font-style:normal;color:#f0f0f0;transform:scaleX(0.9299);">9:57 AM</div>
<div class="t" style="left:1244.00px;top:709.00px;font-size:8.5px;font-family:'Liberation Sans',sans-serif;font-weight:normal;font-style:normal;color:#f0f0f0;transform:scaleX(0.9065);">06/04/20</div>
<div class="a" style="left:0px;top:97px;width:1279px;height:1px;background:#a9aeb6"></div>
<div class="a" style="left:270px;top:98px;width:1009px;height:1px;background:#9c9ea2"></div>
</body></html>
